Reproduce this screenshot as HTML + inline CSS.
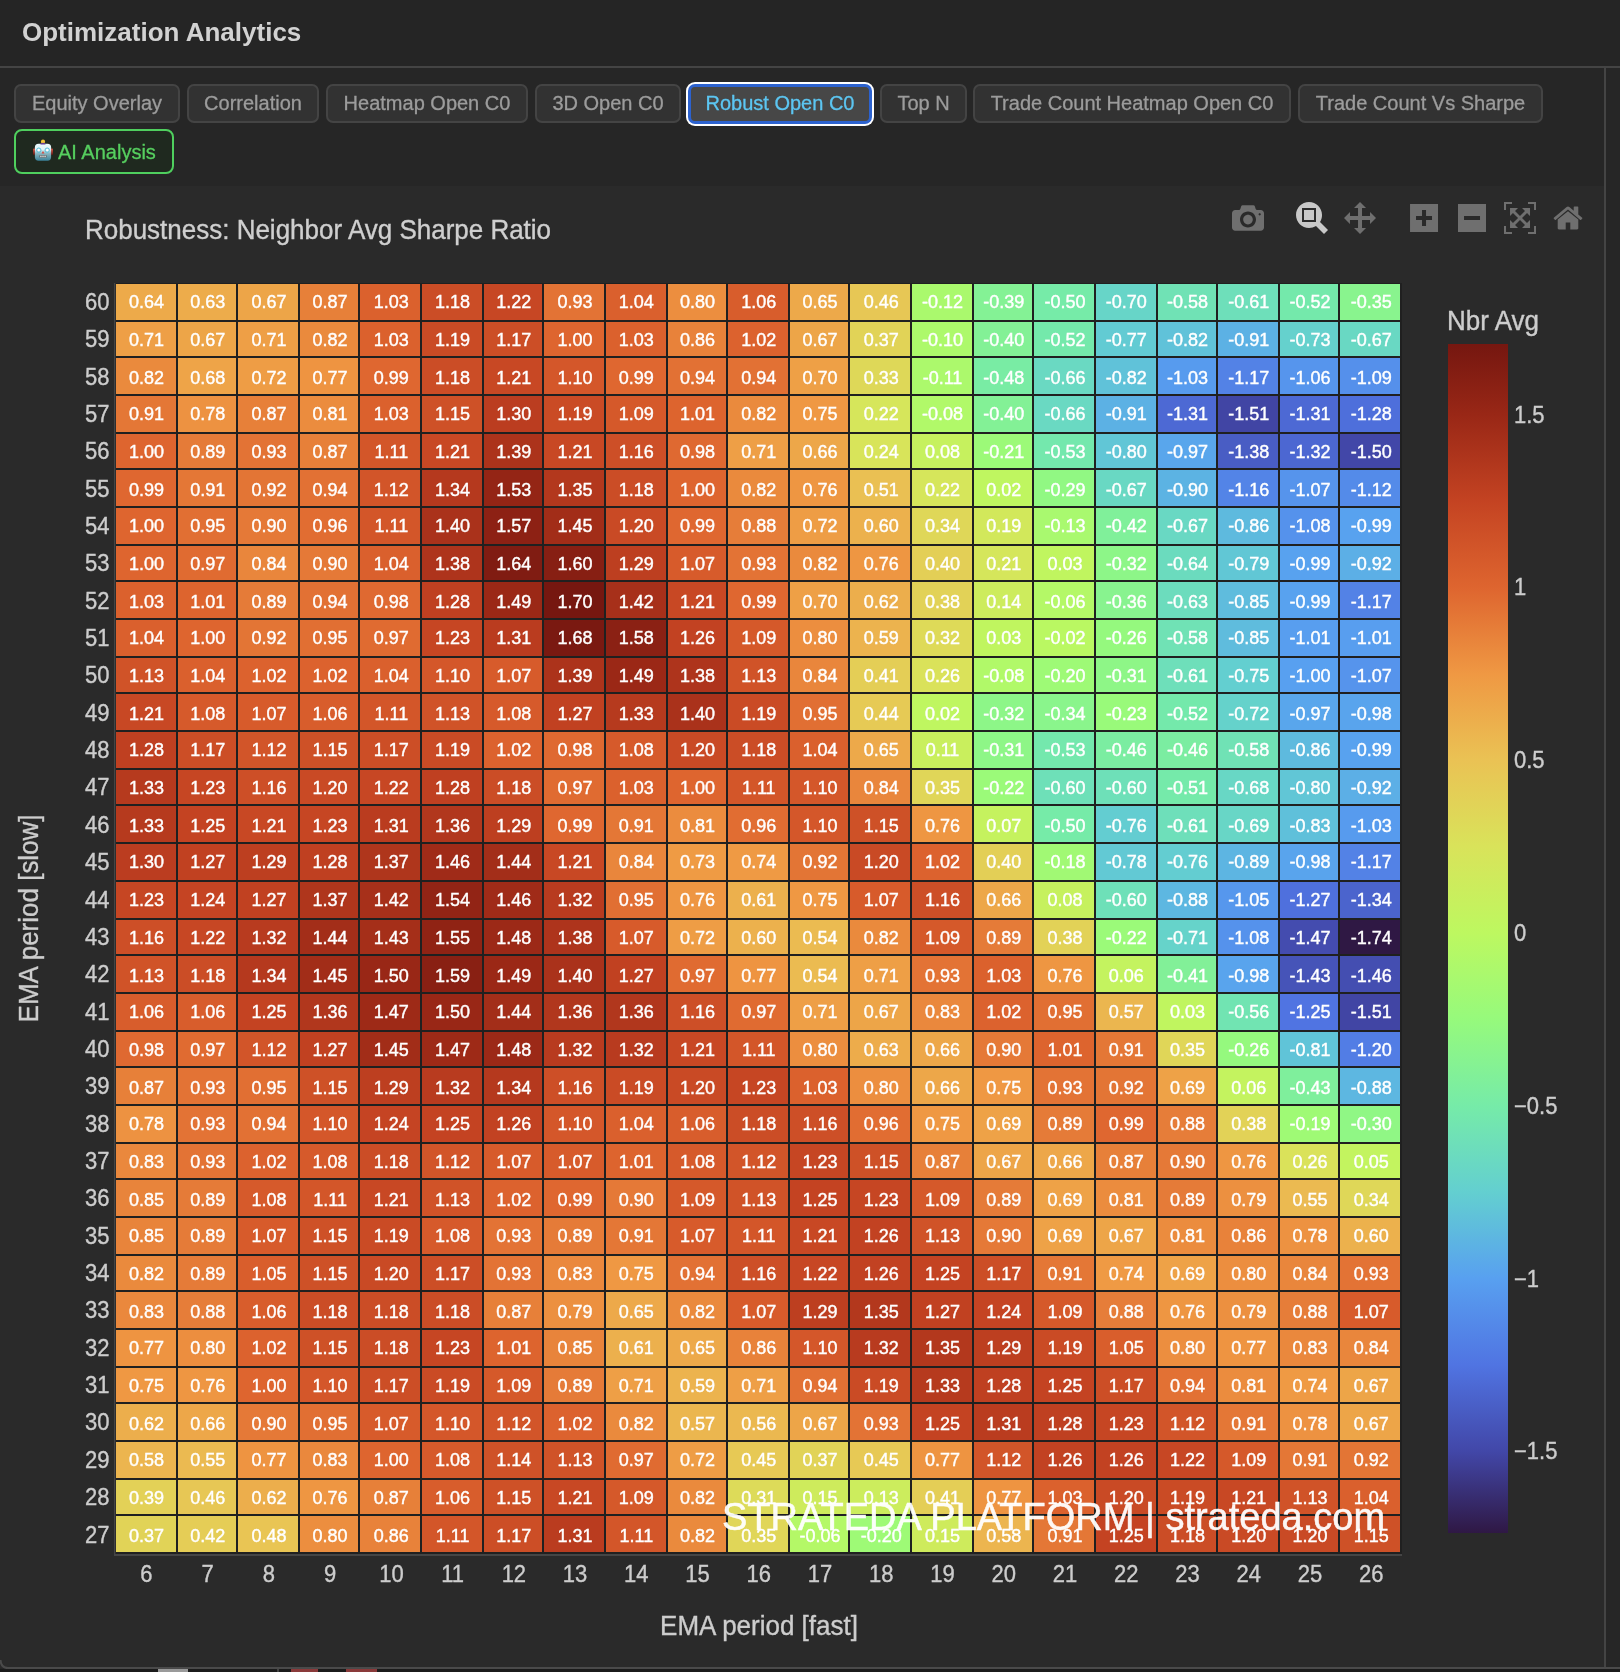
<!DOCTYPE html>
<html><head><meta charset="utf-8">
<style>
html,body{margin:0;padding:0;}
body>*{will-change:transform;}
body{-webkit-font-smoothing:antialiased;width:1620px;height:1672px;overflow:hidden;background:#262626;position:relative;font-family:"Liberation Sans",sans-serif;}
.abs{position:absolute;}
#hdr{position:absolute;left:0;top:0;width:1620px;height:66px;background:#252525;}
#title{position:absolute;left:22px;top:17px;font-weight:bold;font-size:26px;color:#d2d2d2;line-height:30px;white-space:nowrap;}
#hline{position:absolute;left:0;top:66px;width:1620px;height:2px;background:#444;}
#vline{position:absolute;left:1604px;top:68px;width:2px;height:1600px;background:#444;}
#plotbg{position:absolute;left:0;top:186px;width:1604px;height:1482px;background:#2a2a2a;}
.tab{position:absolute;top:84px;height:39px;box-sizing:border-box;border:2px solid #444;border-radius:7px;background:#323232;color:#9c9c9c;font-size:20px;line-height:34px;text-align:center;white-space:nowrap;-webkit-text-stroke:0.3px currentColor;}
.tab.active{top:84px;height:39.5px;border:3px solid #2c62cf;background:#474747;color:#5cc6f2;line-height:33px;box-shadow:0 0 0 2px #fff;}
#ai{position:absolute;left:14px;top:129px;width:160px;height:45px;box-sizing:border-box;border:2px solid #4fcf5e;border-radius:8px;background:#1f291f;}
#aitxt{position:absolute;left:58px;top:140px;font-size:20px;line-height:24px;color:#56cf5f;white-space:nowrap;-webkit-text-stroke:0.3px currentColor;}
.mb{position:absolute;top:201.7px;}
#bottom{position:absolute;left:0;top:1669px;width:1620px;height:3px;background:#1b1b1b;}
#bline{position:absolute;left:6px;top:1667px;width:1614px;height:2px;background:#4a4a4a;}
</style></head><body>
<div id="hdr"></div>
<div id="title">Optimization Analytics</div>
<div id="hline"></div>
<div class="tab" style="left:14px;width:166px">Equity Overlay</div><div class="tab" style="left:187px;width:132px">Correlation</div><div class="tab" style="left:326px;width:202px">Heatmap Open C0</div><div class="tab" style="left:535px;width:146px">3D Open C0</div><div class="tab active" style="left:688px;width:184px">Robust Open C0</div><div class="tab" style="left:880px;width:87px">Top N</div><div class="tab" style="left:973px;width:318px">Trade Count Heatmap Open C0</div><div class="tab" style="left:1298px;width:245px">Trade Count Vs Sharpe</div>
<div id="ai"></div><svg width="30" height="30" viewBox="0 0 30 30" style="position:absolute;left:28px;top:135px">
<defs><linearGradient id="rf" x1="0" y1="0" x2="0" y2="1">
<stop offset="0" stop-color="#e8fafd"/><stop offset="0.35" stop-color="#dff3f7"/><stop offset="0.55" stop-color="#8fb9c3"/><stop offset="1" stop-color="#3a8199"/></linearGradient>
<linearGradient id="re" x1="0" y1="0" x2="0" y2="1"><stop offset="0" stop-color="#d9584a"/><stop offset="1" stop-color="#5a1410"/></linearGradient></defs>
<rect x="5" y="13.6" width="2.4" height="6.4" rx="1" fill="url(#re)"/>
<rect x="22.6" y="13.6" width="2.4" height="6.4" rx="1" fill="url(#re)"/>
<rect x="6.9" y="8.7" width="16.2" height="17" rx="3.6" fill="url(#rf)"/>
<circle cx="15" cy="6.7" r="2.1" fill="#f0c43a"/>
<path d="M12.4 9.6 A2.6 1.9 0 0 1 17.6 9.6 Z" fill="#6a3d9a"/>
<circle cx="10.8" cy="15.2" r="2.2" fill="none" stroke="#56c0dc" stroke-width="1"/>
<circle cx="19.2" cy="15.2" r="2.2" fill="none" stroke="#56c0dc" stroke-width="1"/>
<circle cx="10.8" cy="15.2" r="1.1" fill="#fff"/>
<circle cx="19.2" cy="15.2" r="1.1" fill="#fff"/>
<path d="M13.6 18.6 L16.4 18.6 L15 16 Z" fill="#d8453a"/>
<rect x="11.2" y="20" width="7.6" height="2.8" rx="1" fill="#5d6b70"/>
<rect x="12.2" y="20.6" width="1.4" height="1.6" fill="#dcdcdc"/><rect x="14.3" y="20.6" width="1.4" height="1.6" fill="#dcdcdc"/><rect x="16.4" y="20.6" width="1.4" height="1.6" fill="#dcdcdc"/>
</svg><div id="aitxt">AI Analysis</div>
<div id="plotbg"></div>
<div id="vline"></div>
<svg class="abs" style="left:0;top:0" width="1604" height="1667" viewBox="0 0 1604 1667">
<defs><linearGradient id="cb" x1="0" y1="1" x2="0" y2="0"><stop offset="0.0000" stop-color="#2F1844"/><stop offset="0.0686" stop-color="#4247A8"/><stop offset="0.1413" stop-color="#5074E2"/><stop offset="0.2140" stop-color="#58A0F0"/><stop offset="0.2866" stop-color="#63CFD0"/><stop offset="0.3593" stop-color="#76EBA8"/><stop offset="0.4320" stop-color="#96FA7C"/><stop offset="0.5046" stop-color="#BDF860"/><stop offset="0.5773" stop-color="#D9E35A"/><stop offset="0.6500" stop-color="#EAC254"/><stop offset="0.7226" stop-color="#EF9843"/><stop offset="0.7953" stop-color="#DE652F"/><stop offset="0.8680" stop-color="#C44322"/><stop offset="0.9406" stop-color="#992716"/><stop offset="0.9988" stop-color="#761710"/></linearGradient></defs>
<text transform="translate(85 239) scale(1 1.05)" font-size="26" fill="#cfcfcf" stroke="#cfcfcf" stroke-width="0.35">Robustness: Neighbor Avg Sharpe Ratio</text>
<rect x="115.00" y="283.00" width="1287.00" height="1271.00" fill="#202020"/>
<rect x="116" y="284" width="60" height="36" fill="#edaa4a"/><rect x="178" y="284" width="58" height="36" fill="#edac4b"/><rect x="238" y="284" width="60" height="36" fill="#eda548"/><rect x="300" y="284" width="58" height="36" fill="#e78039"/><rect x="360" y="284" width="60" height="36" fill="#db612d"/><rect x="422" y="284" width="60" height="36" fill="#cb4d26"/><rect x="484" y="284" width="58" height="36" fill="#c74724"/><rect x="544" y="284" width="60" height="36" fill="#e37335"/><rect x="606" y="284" width="60" height="36" fill="#da602d"/><rect x="668" y="284" width="58" height="36" fill="#ec8e3f"/><rect x="728" y="284" width="60" height="36" fill="#d85d2c"/><rect x="790" y="284" width="58" height="36" fill="#eda94a"/><rect x="850" y="284" width="60" height="36" fill="#e7c755"/><rect x="912" y="284" width="60" height="36" fill="#aaf96d"/><rect x="974" y="284" width="58" height="36" fill="#84f295"/><rect x="1034" y="284" width="60" height="36" fill="#76eba8"/><rect x="1096" y="284" width="60" height="36" fill="#67d5c8"/><rect x="1158" y="284" width="58" height="36" fill="#70e2b5"/><rect x="1218" y="284" width="60" height="36" fill="#6edfba"/><rect x="1280" y="284" width="58" height="36" fill="#74e9ab"/><rect x="1340" y="284" width="60" height="36" fill="#89f48e"/><rect x="116" y="322" width="60" height="34" fill="#ee9f46"/><rect x="178" y="322" width="58" height="34" fill="#eda548"/><rect x="238" y="322" width="60" height="34" fill="#ee9f46"/><rect x="300" y="322" width="58" height="34" fill="#ea8a3d"/><rect x="360" y="322" width="60" height="34" fill="#db612d"/><rect x="422" y="322" width="60" height="34" fill="#ca4b25"/><rect x="484" y="322" width="58" height="34" fill="#cc4e26"/><rect x="544" y="322" width="60" height="34" fill="#de652f"/><rect x="606" y="322" width="60" height="34" fill="#db612d"/><rect x="668" y="322" width="58" height="34" fill="#e8823a"/><rect x="728" y="322" width="60" height="34" fill="#dc622e"/><rect x="790" y="322" width="58" height="34" fill="#eda548"/><rect x="850" y="322" width="60" height="34" fill="#e1d357"/><rect x="912" y="322" width="60" height="34" fill="#adf96b"/><rect x="974" y="322" width="58" height="34" fill="#83f196"/><rect x="1034" y="322" width="60" height="34" fill="#74e9ab"/><rect x="1096" y="322" width="60" height="34" fill="#62cbd3"/><rect x="1158" y="322" width="58" height="34" fill="#60c2d9"/><rect x="1218" y="322" width="60" height="34" fill="#5cb1e4"/><rect x="1280" y="322" width="58" height="34" fill="#65d1cd"/><rect x="1340" y="322" width="60" height="34" fill="#69d8c3"/><rect x="116" y="358" width="60" height="36" fill="#ea8a3d"/><rect x="178" y="358" width="58" height="36" fill="#eea448"/><rect x="238" y="358" width="60" height="36" fill="#ee9d45"/><rect x="300" y="358" width="58" height="36" fill="#ee9441"/><rect x="360" y="358" width="60" height="36" fill="#df6730"/><rect x="422" y="358" width="60" height="36" fill="#cb4d26"/><rect x="484" y="358" width="58" height="36" fill="#c84824"/><rect x="544" y="358" width="60" height="36" fill="#d4572a"/><rect x="606" y="358" width="60" height="36" fill="#df6730"/><rect x="668" y="358" width="58" height="36" fill="#e27134"/><rect x="728" y="358" width="60" height="36" fill="#e27134"/><rect x="790" y="358" width="58" height="36" fill="#eea046"/><rect x="850" y="358" width="60" height="36" fill="#ded858"/><rect x="912" y="358" width="60" height="36" fill="#acf96c"/><rect x="974" y="358" width="58" height="36" fill="#79eca4"/><rect x="1034" y="358" width="60" height="36" fill="#6ad9c2"/><rect x="1096" y="358" width="60" height="36" fill="#60c2d9"/><rect x="1158" y="358" width="58" height="36" fill="#579bee"/><rect x="1218" y="358" width="60" height="36" fill="#5382e6"/><rect x="1280" y="358" width="58" height="36" fill="#5695ed"/><rect x="1340" y="358" width="60" height="36" fill="#5590eb"/><rect x="116" y="396" width="60" height="36" fill="#e47736"/><rect x="178" y="396" width="58" height="36" fill="#ed9241"/><rect x="238" y="396" width="60" height="36" fill="#e78039"/><rect x="300" y="396" width="58" height="36" fill="#eb8c3e"/><rect x="360" y="396" width="60" height="36" fill="#db612d"/><rect x="422" y="396" width="60" height="36" fill="#ce5127"/><rect x="484" y="396" width="58" height="36" fill="#bb3d20"/><rect x="544" y="396" width="60" height="36" fill="#ca4b25"/><rect x="606" y="396" width="60" height="36" fill="#d5592a"/><rect x="668" y="396" width="58" height="36" fill="#dd642e"/><rect x="728" y="396" width="60" height="36" fill="#ea8a3d"/><rect x="790" y="396" width="58" height="36" fill="#ef9843"/><rect x="850" y="396" width="60" height="36" fill="#d6e65b"/><rect x="912" y="396" width="60" height="36" fill="#b1f969"/><rect x="974" y="396" width="58" height="36" fill="#83f196"/><rect x="1034" y="396" width="60" height="36" fill="#6ad9c2"/><rect x="1096" y="396" width="60" height="36" fill="#5cb1e4"/><rect x="1158" y="396" width="58" height="36" fill="#4d69d4"/><rect x="1218" y="396" width="60" height="36" fill="#4145a4"/><rect x="1280" y="396" width="58" height="36" fill="#4d69d4"/><rect x="1340" y="396" width="60" height="36" fill="#4e6fdb"/><rect x="116" y="434" width="60" height="34" fill="#de652f"/><rect x="178" y="434" width="58" height="34" fill="#e57b38"/><rect x="238" y="434" width="60" height="34" fill="#e37335"/><rect x="300" y="434" width="58" height="34" fill="#e78039"/><rect x="360" y="434" width="60" height="34" fill="#d35629"/><rect x="422" y="434" width="60" height="34" fill="#c84824"/><rect x="484" y="434" width="58" height="34" fill="#ac331b"/><rect x="544" y="434" width="60" height="34" fill="#c84824"/><rect x="606" y="434" width="60" height="34" fill="#cd4f27"/><rect x="668" y="434" width="58" height="34" fill="#df6931"/><rect x="728" y="434" width="60" height="34" fill="#ee9f46"/><rect x="790" y="434" width="58" height="34" fill="#eda749"/><rect x="850" y="434" width="60" height="34" fill="#d8e45a"/><rect x="912" y="434" width="60" height="34" fill="#c6f15e"/><rect x="974" y="434" width="58" height="34" fill="#9cfa78"/><rect x="1034" y="434" width="60" height="34" fill="#74e8ad"/><rect x="1096" y="434" width="60" height="34" fill="#61c6d6"/><rect x="1158" y="434" width="58" height="34" fill="#59a6ec"/><rect x="1218" y="434" width="60" height="34" fill="#495dc4"/><rect x="1280" y="434" width="58" height="34" fill="#4c67d2"/><rect x="1340" y="434" width="60" height="34" fill="#4247a8"/><rect x="116" y="470" width="60" height="36" fill="#df6730"/><rect x="178" y="470" width="58" height="36" fill="#e47736"/><rect x="238" y="470" width="60" height="36" fill="#e37535"/><rect x="300" y="470" width="58" height="36" fill="#e27134"/><rect x="360" y="470" width="60" height="36" fill="#d25529"/><rect x="422" y="470" width="60" height="36" fill="#b5391e"/><rect x="484" y="470" width="58" height="36" fill="#942515"/><rect x="544" y="470" width="60" height="36" fill="#b3381d"/><rect x="606" y="470" width="60" height="36" fill="#cb4d26"/><rect x="668" y="470" width="58" height="36" fill="#de652f"/><rect x="728" y="470" width="60" height="36" fill="#ea8a3d"/><rect x="790" y="470" width="58" height="36" fill="#ee9642"/><rect x="850" y="470" width="60" height="36" fill="#eac053"/><rect x="912" y="470" width="60" height="36" fill="#d6e65b"/><rect x="974" y="470" width="58" height="36" fill="#bff660"/><rect x="1034" y="470" width="60" height="36" fill="#91f883"/><rect x="1096" y="470" width="60" height="36" fill="#69d8c3"/><rect x="1158" y="470" width="58" height="36" fill="#5cb3e3"/><rect x="1218" y="470" width="60" height="36" fill="#5384e7"/><rect x="1280" y="470" width="58" height="36" fill="#5694ec"/><rect x="1340" y="470" width="60" height="36" fill="#548be9"/><rect x="116" y="508" width="60" height="36" fill="#de652f"/><rect x="178" y="508" width="58" height="36" fill="#e16f33"/><rect x="238" y="508" width="60" height="36" fill="#e57937"/><rect x="300" y="508" width="58" height="36" fill="#e16d32"/><rect x="360" y="508" width="60" height="36" fill="#d35629"/><rect x="422" y="508" width="60" height="36" fill="#aa321b"/><rect x="484" y="508" width="58" height="36" fill="#8d2114"/><rect x="544" y="508" width="60" height="36" fill="#a22d18"/><rect x="606" y="508" width="60" height="36" fill="#c94a25"/><rect x="668" y="508" width="58" height="36" fill="#df6730"/><rect x="728" y="508" width="60" height="36" fill="#e67d39"/><rect x="790" y="508" width="58" height="36" fill="#ee9d45"/><rect x="850" y="508" width="60" height="36" fill="#ecb14d"/><rect x="912" y="508" width="60" height="36" fill="#dfd758"/><rect x="974" y="508" width="58" height="36" fill="#d2e85b"/><rect x="1034" y="508" width="60" height="36" fill="#a9f96f"/><rect x="1096" y="508" width="60" height="36" fill="#80f09a"/><rect x="1158" y="508" width="58" height="36" fill="#69d8c3"/><rect x="1218" y="508" width="60" height="36" fill="#5ebade"/><rect x="1280" y="508" width="58" height="36" fill="#5592ec"/><rect x="1340" y="508" width="60" height="36" fill="#58a2ef"/><rect x="116" y="546" width="60" height="34" fill="#de652f"/><rect x="178" y="546" width="58" height="34" fill="#e06b31"/><rect x="238" y="546" width="60" height="34" fill="#e9863c"/><rect x="300" y="546" width="58" height="34" fill="#e57937"/><rect x="360" y="546" width="60" height="34" fill="#da602d"/><rect x="422" y="546" width="60" height="34" fill="#ae341c"/><rect x="484" y="546" width="58" height="34" fill="#801c12"/><rect x="544" y="546" width="60" height="34" fill="#871f13"/><rect x="606" y="546" width="60" height="34" fill="#bd3f20"/><rect x="668" y="546" width="58" height="34" fill="#d75b2b"/><rect x="728" y="546" width="60" height="34" fill="#e37335"/><rect x="790" y="546" width="58" height="34" fill="#ea8a3d"/><rect x="850" y="546" width="60" height="34" fill="#ee9642"/><rect x="912" y="546" width="60" height="34" fill="#e3cf56"/><rect x="974" y="546" width="58" height="34" fill="#d5e65b"/><rect x="1034" y="546" width="60" height="34" fill="#c0f55f"/><rect x="1096" y="546" width="60" height="34" fill="#8df688"/><rect x="1158" y="546" width="58" height="34" fill="#6bdbbe"/><rect x="1218" y="546" width="60" height="34" fill="#61c7d5"/><rect x="1280" y="546" width="58" height="34" fill="#58a2ef"/><rect x="1340" y="546" width="60" height="34" fill="#5cafe6"/><rect x="116" y="582" width="60" height="36" fill="#db612d"/><rect x="178" y="582" width="58" height="36" fill="#dd642e"/><rect x="238" y="582" width="60" height="36" fill="#e57b38"/><rect x="300" y="582" width="58" height="36" fill="#e27134"/><rect x="360" y="582" width="60" height="36" fill="#df6931"/><rect x="422" y="582" width="60" height="36" fill="#bf4021"/><rect x="484" y="582" width="58" height="36" fill="#9b2816"/><rect x="544" y="582" width="60" height="36" fill="#761710"/><rect x="606" y="582" width="60" height="36" fill="#a7301a"/><rect x="668" y="582" width="58" height="36" fill="#c84824"/><rect x="728" y="582" width="60" height="36" fill="#df6730"/><rect x="790" y="582" width="58" height="36" fill="#eea046"/><rect x="850" y="582" width="60" height="36" fill="#ecae4c"/><rect x="912" y="582" width="60" height="36" fill="#e2d257"/><rect x="974" y="582" width="58" height="36" fill="#cdec5d"/><rect x="1034" y="582" width="60" height="36" fill="#b4f867"/><rect x="1096" y="582" width="60" height="36" fill="#88f38f"/><rect x="1158" y="582" width="58" height="36" fill="#6cdcbd"/><rect x="1218" y="582" width="60" height="36" fill="#5fbcdd"/><rect x="1280" y="582" width="58" height="36" fill="#58a2ef"/><rect x="1340" y="582" width="60" height="36" fill="#5382e6"/><rect x="116" y="620" width="60" height="36" fill="#da602d"/><rect x="178" y="620" width="58" height="36" fill="#de652f"/><rect x="238" y="620" width="60" height="36" fill="#e37535"/><rect x="300" y="620" width="58" height="36" fill="#e16f33"/><rect x="360" y="620" width="60" height="36" fill="#e06b31"/><rect x="422" y="620" width="60" height="36" fill="#c64623"/><rect x="484" y="620" width="58" height="36" fill="#ba3c1f"/><rect x="544" y="620" width="60" height="36" fill="#7a1911"/><rect x="606" y="620" width="60" height="36" fill="#8b2114"/><rect x="668" y="620" width="58" height="36" fill="#c24222"/><rect x="728" y="620" width="60" height="36" fill="#d5592a"/><rect x="790" y="620" width="58" height="36" fill="#ec8e3f"/><rect x="850" y="620" width="60" height="36" fill="#ecb34e"/><rect x="912" y="620" width="60" height="36" fill="#deda58"/><rect x="974" y="620" width="58" height="36" fill="#c0f55f"/><rect x="1034" y="620" width="60" height="36" fill="#baf862"/><rect x="1096" y="620" width="60" height="36" fill="#95f97e"/><rect x="1158" y="620" width="58" height="36" fill="#70e2b5"/><rect x="1218" y="620" width="60" height="36" fill="#5fbcdd"/><rect x="1280" y="620" width="58" height="36" fill="#589eef"/><rect x="1340" y="620" width="60" height="36" fill="#589eef"/><rect x="116" y="658" width="60" height="34" fill="#d05328"/><rect x="178" y="658" width="58" height="34" fill="#da602d"/><rect x="238" y="658" width="60" height="34" fill="#dc622e"/><rect x="300" y="658" width="58" height="34" fill="#dc622e"/><rect x="360" y="658" width="60" height="34" fill="#da602d"/><rect x="422" y="658" width="60" height="34" fill="#d4572a"/><rect x="484" y="658" width="58" height="34" fill="#d75b2b"/><rect x="544" y="658" width="60" height="34" fill="#ac331b"/><rect x="606" y="658" width="60" height="34" fill="#9b2816"/><rect x="668" y="658" width="58" height="34" fill="#ae341c"/><rect x="728" y="658" width="60" height="34" fill="#d05328"/><rect x="790" y="658" width="58" height="34" fill="#e9863c"/><rect x="850" y="658" width="60" height="34" fill="#e4ce56"/><rect x="912" y="658" width="60" height="34" fill="#dae25a"/><rect x="974" y="658" width="58" height="34" fill="#b1f969"/><rect x="1034" y="658" width="60" height="34" fill="#9efa76"/><rect x="1096" y="658" width="60" height="34" fill="#8ef687"/><rect x="1158" y="658" width="58" height="34" fill="#6edfba"/><rect x="1218" y="658" width="60" height="34" fill="#63cfd0"/><rect x="1280" y="658" width="58" height="34" fill="#58a0f0"/><rect x="1340" y="658" width="60" height="34" fill="#5694ec"/><rect x="116" y="694" width="60" height="36" fill="#c84824"/><rect x="178" y="694" width="58" height="36" fill="#d65a2b"/><rect x="238" y="694" width="60" height="36" fill="#d75b2b"/><rect x="300" y="694" width="58" height="36" fill="#d85d2c"/><rect x="360" y="694" width="60" height="36" fill="#d35629"/><rect x="422" y="694" width="60" height="36" fill="#d05328"/><rect x="484" y="694" width="58" height="36" fill="#d65a2b"/><rect x="544" y="694" width="60" height="36" fill="#c14121"/><rect x="606" y="694" width="60" height="36" fill="#b63a1e"/><rect x="668" y="694" width="58" height="36" fill="#aa321b"/><rect x="728" y="694" width="60" height="36" fill="#ca4b25"/><rect x="790" y="694" width="58" height="36" fill="#e16f33"/><rect x="850" y="694" width="60" height="36" fill="#e6ca55"/><rect x="912" y="694" width="60" height="36" fill="#bff660"/><rect x="974" y="694" width="58" height="36" fill="#8df688"/><rect x="1034" y="694" width="60" height="36" fill="#8af58c"/><rect x="1096" y="694" width="60" height="36" fill="#99fa7a"/><rect x="1158" y="694" width="58" height="36" fill="#74e9ab"/><rect x="1218" y="694" width="60" height="36" fill="#65d2cb"/><rect x="1280" y="694" width="58" height="36" fill="#59a6ec"/><rect x="1340" y="694" width="60" height="36" fill="#59a4ed"/><rect x="116" y="732" width="60" height="36" fill="#bf4021"/><rect x="178" y="732" width="58" height="36" fill="#cc4e26"/><rect x="238" y="732" width="60" height="36" fill="#d25529"/><rect x="300" y="732" width="58" height="36" fill="#ce5127"/><rect x="360" y="732" width="60" height="36" fill="#cc4e26"/><rect x="422" y="732" width="60" height="36" fill="#ca4b25"/><rect x="484" y="732" width="58" height="36" fill="#dc622e"/><rect x="544" y="732" width="60" height="36" fill="#df6931"/><rect x="606" y="732" width="60" height="36" fill="#d65a2b"/><rect x="668" y="732" width="58" height="36" fill="#c94a25"/><rect x="728" y="732" width="60" height="36" fill="#cb4d26"/><rect x="790" y="732" width="58" height="36" fill="#da602d"/><rect x="850" y="732" width="60" height="36" fill="#eda94a"/><rect x="912" y="732" width="60" height="36" fill="#c9ef5d"/><rect x="974" y="732" width="58" height="36" fill="#8ef687"/><rect x="1034" y="732" width="60" height="36" fill="#74e8ad"/><rect x="1096" y="732" width="60" height="36" fill="#7beda1"/><rect x="1158" y="732" width="58" height="36" fill="#7beda1"/><rect x="1218" y="732" width="60" height="36" fill="#70e2b5"/><rect x="1280" y="732" width="58" height="36" fill="#5ebade"/><rect x="1340" y="732" width="60" height="36" fill="#58a2ef"/><rect x="116" y="770" width="60" height="34" fill="#b63a1e"/><rect x="178" y="770" width="58" height="34" fill="#c64623"/><rect x="238" y="770" width="60" height="34" fill="#cd4f27"/><rect x="300" y="770" width="58" height="34" fill="#c94a25"/><rect x="360" y="770" width="60" height="34" fill="#c74724"/><rect x="422" y="770" width="60" height="34" fill="#bf4021"/><rect x="484" y="770" width="58" height="34" fill="#cb4d26"/><rect x="544" y="770" width="60" height="34" fill="#e06b31"/><rect x="606" y="770" width="60" height="34" fill="#db612d"/><rect x="668" y="770" width="58" height="34" fill="#de652f"/><rect x="728" y="770" width="60" height="34" fill="#d35629"/><rect x="790" y="770" width="58" height="34" fill="#d4572a"/><rect x="850" y="770" width="60" height="34" fill="#e9863c"/><rect x="912" y="770" width="60" height="34" fill="#e0d658"/><rect x="974" y="770" width="58" height="34" fill="#9bfa79"/><rect x="1034" y="770" width="60" height="34" fill="#6ee0b8"/><rect x="1096" y="770" width="60" height="34" fill="#6ee0b8"/><rect x="1158" y="770" width="58" height="34" fill="#75eaaa"/><rect x="1218" y="770" width="60" height="34" fill="#68d7c5"/><rect x="1280" y="770" width="58" height="34" fill="#61c6d6"/><rect x="1340" y="770" width="60" height="34" fill="#5cafe6"/><rect x="116" y="806" width="60" height="36" fill="#b63a1e"/><rect x="178" y="806" width="58" height="36" fill="#c44322"/><rect x="238" y="806" width="60" height="36" fill="#c84824"/><rect x="300" y="806" width="58" height="36" fill="#c64623"/><rect x="360" y="806" width="60" height="36" fill="#ba3c1f"/><rect x="422" y="806" width="60" height="36" fill="#b1371d"/><rect x="484" y="806" width="58" height="36" fill="#bd3f20"/><rect x="544" y="806" width="60" height="36" fill="#df6730"/><rect x="606" y="806" width="60" height="36" fill="#e47736"/><rect x="668" y="806" width="58" height="36" fill="#eb8c3e"/><rect x="728" y="806" width="60" height="36" fill="#e16d32"/><rect x="790" y="806" width="58" height="36" fill="#d4572a"/><rect x="850" y="806" width="60" height="36" fill="#ce5127"/><rect x="912" y="806" width="60" height="36" fill="#ee9642"/><rect x="974" y="806" width="58" height="36" fill="#c5f25e"/><rect x="1034" y="806" width="60" height="36" fill="#76eba8"/><rect x="1096" y="806" width="60" height="36" fill="#63cdd1"/><rect x="1158" y="806" width="58" height="36" fill="#6edfba"/><rect x="1218" y="806" width="60" height="36" fill="#68d6c6"/><rect x="1280" y="806" width="58" height="36" fill="#5fc0da"/><rect x="1340" y="806" width="60" height="36" fill="#579bee"/><rect x="116" y="844" width="60" height="36" fill="#bb3d20"/><rect x="178" y="844" width="58" height="36" fill="#c14121"/><rect x="238" y="844" width="60" height="36" fill="#bd3f20"/><rect x="300" y="844" width="58" height="36" fill="#bf4021"/><rect x="360" y="844" width="60" height="36" fill="#af361c"/><rect x="422" y="844" width="60" height="36" fill="#a02b18"/><rect x="484" y="844" width="58" height="36" fill="#a32e19"/><rect x="544" y="844" width="60" height="36" fill="#c84824"/><rect x="606" y="844" width="60" height="36" fill="#e9863c"/><rect x="668" y="844" width="58" height="36" fill="#ef9b44"/><rect x="728" y="844" width="60" height="36" fill="#ef9a44"/><rect x="790" y="844" width="58" height="36" fill="#e37535"/><rect x="850" y="844" width="60" height="36" fill="#c94a25"/><rect x="912" y="844" width="60" height="36" fill="#dc622e"/><rect x="974" y="844" width="58" height="36" fill="#e3cf56"/><rect x="1034" y="844" width="60" height="36" fill="#a1f974"/><rect x="1096" y="844" width="60" height="36" fill="#62c9d4"/><rect x="1158" y="844" width="58" height="36" fill="#63cdd1"/><rect x="1218" y="844" width="60" height="36" fill="#5db5e2"/><rect x="1280" y="844" width="58" height="36" fill="#59a4ed"/><rect x="1340" y="844" width="60" height="36" fill="#5382e6"/><rect x="116" y="882" width="60" height="36" fill="#c64623"/><rect x="178" y="882" width="58" height="36" fill="#c54423"/><rect x="238" y="882" width="60" height="36" fill="#c14121"/><rect x="300" y="882" width="58" height="36" fill="#af361c"/><rect x="360" y="882" width="60" height="36" fill="#a7301a"/><rect x="422" y="882" width="60" height="36" fill="#922415"/><rect x="484" y="882" width="58" height="36" fill="#a02b18"/><rect x="544" y="882" width="60" height="36" fill="#b83b1f"/><rect x="606" y="882" width="60" height="36" fill="#e16f33"/><rect x="668" y="882" width="58" height="36" fill="#ee9642"/><rect x="728" y="882" width="60" height="36" fill="#ecb04d"/><rect x="790" y="882" width="58" height="36" fill="#ef9843"/><rect x="850" y="882" width="60" height="36" fill="#d75b2b"/><rect x="912" y="882" width="60" height="36" fill="#cd4f27"/><rect x="974" y="882" width="58" height="36" fill="#eda749"/><rect x="1034" y="882" width="60" height="36" fill="#c6f15e"/><rect x="1096" y="882" width="60" height="36" fill="#6ee0b8"/><rect x="1158" y="882" width="58" height="36" fill="#5db7e1"/><rect x="1218" y="882" width="60" height="36" fill="#5697ed"/><rect x="1280" y="882" width="58" height="36" fill="#4f70dd"/><rect x="1340" y="882" width="60" height="36" fill="#4b64cd"/><rect x="116" y="920" width="60" height="34" fill="#cd4f27"/><rect x="178" y="920" width="58" height="34" fill="#c74724"/><rect x="238" y="920" width="60" height="34" fill="#b83b1f"/><rect x="300" y="920" width="58" height="34" fill="#a32e19"/><rect x="360" y="920" width="60" height="34" fill="#a52f19"/><rect x="422" y="920" width="60" height="34" fill="#902314"/><rect x="484" y="920" width="58" height="34" fill="#9c2917"/><rect x="544" y="920" width="60" height="34" fill="#ae341c"/><rect x="606" y="920" width="60" height="34" fill="#d75b2b"/><rect x="668" y="920" width="58" height="34" fill="#ee9d45"/><rect x="728" y="920" width="60" height="34" fill="#ecb14d"/><rect x="790" y="920" width="58" height="34" fill="#ebbb51"/><rect x="850" y="920" width="60" height="34" fill="#ea8a3d"/><rect x="912" y="920" width="60" height="34" fill="#d5592a"/><rect x="974" y="920" width="58" height="34" fill="#e57b38"/><rect x="1034" y="920" width="60" height="34" fill="#e2d257"/><rect x="1096" y="920" width="60" height="34" fill="#9bfa79"/><rect x="1158" y="920" width="58" height="34" fill="#66d3ca"/><rect x="1218" y="920" width="60" height="34" fill="#5592ec"/><rect x="1280" y="920" width="58" height="34" fill="#444caf"/><rect x="1340" y="920" width="60" height="34" fill="#2f1844"/><rect x="116" y="956" width="60" height="36" fill="#d05328"/><rect x="178" y="956" width="58" height="36" fill="#cb4d26"/><rect x="238" y="956" width="60" height="36" fill="#b5391e"/><rect x="300" y="956" width="58" height="36" fill="#a22d18"/><rect x="360" y="956" width="60" height="36" fill="#992716"/><rect x="422" y="956" width="60" height="36" fill="#892013"/><rect x="484" y="956" width="58" height="36" fill="#9b2816"/><rect x="544" y="956" width="60" height="36" fill="#aa321b"/><rect x="606" y="956" width="60" height="36" fill="#c14121"/><rect x="668" y="956" width="58" height="36" fill="#e06b31"/><rect x="728" y="956" width="60" height="36" fill="#ee9441"/><rect x="790" y="956" width="58" height="36" fill="#ebbb51"/><rect x="850" y="956" width="60" height="36" fill="#ee9f46"/><rect x="912" y="956" width="60" height="36" fill="#e37335"/><rect x="974" y="956" width="58" height="36" fill="#db612d"/><rect x="1034" y="956" width="60" height="36" fill="#ee9642"/><rect x="1096" y="956" width="60" height="36" fill="#c4f35f"/><rect x="1158" y="956" width="58" height="36" fill="#82f098"/><rect x="1218" y="956" width="60" height="36" fill="#59a4ed"/><rect x="1280" y="956" width="58" height="36" fill="#4654b8"/><rect x="1340" y="956" width="60" height="36" fill="#444eb1"/><rect x="116" y="994" width="60" height="36" fill="#d85d2c"/><rect x="178" y="994" width="58" height="36" fill="#d85d2c"/><rect x="238" y="994" width="60" height="36" fill="#c44322"/><rect x="300" y="994" width="58" height="36" fill="#b1371d"/><rect x="360" y="994" width="60" height="36" fill="#9e2a17"/><rect x="422" y="994" width="60" height="36" fill="#992716"/><rect x="484" y="994" width="58" height="36" fill="#a32e19"/><rect x="544" y="994" width="60" height="36" fill="#b1371d"/><rect x="606" y="994" width="60" height="36" fill="#b1371d"/><rect x="668" y="994" width="58" height="36" fill="#cd4f27"/><rect x="728" y="994" width="60" height="36" fill="#e06b31"/><rect x="790" y="994" width="58" height="36" fill="#ee9f46"/><rect x="850" y="994" width="60" height="36" fill="#eda548"/><rect x="912" y="994" width="60" height="36" fill="#ea883d"/><rect x="974" y="994" width="58" height="36" fill="#dc622e"/><rect x="1034" y="994" width="60" height="36" fill="#e16f33"/><rect x="1096" y="994" width="60" height="36" fill="#ebb64f"/><rect x="1158" y="994" width="58" height="36" fill="#c0f55f"/><rect x="1218" y="994" width="60" height="36" fill="#71e4b2"/><rect x="1280" y="994" width="58" height="36" fill="#5074e2"/><rect x="1340" y="994" width="60" height="36" fill="#4145a4"/><rect x="116" y="1032" width="60" height="34" fill="#df6931"/><rect x="178" y="1032" width="58" height="34" fill="#e06b31"/><rect x="238" y="1032" width="60" height="34" fill="#d25529"/><rect x="300" y="1032" width="58" height="34" fill="#c14121"/><rect x="360" y="1032" width="60" height="34" fill="#a22d18"/><rect x="422" y="1032" width="60" height="34" fill="#9e2a17"/><rect x="484" y="1032" width="58" height="34" fill="#9c2917"/><rect x="544" y="1032" width="60" height="34" fill="#b83b1f"/><rect x="606" y="1032" width="60" height="34" fill="#b83b1f"/><rect x="668" y="1032" width="58" height="34" fill="#c84824"/><rect x="728" y="1032" width="60" height="34" fill="#d35629"/><rect x="790" y="1032" width="58" height="34" fill="#ec8e3f"/><rect x="850" y="1032" width="60" height="34" fill="#edac4b"/><rect x="912" y="1032" width="60" height="34" fill="#eda749"/><rect x="974" y="1032" width="58" height="34" fill="#e57937"/><rect x="1034" y="1032" width="60" height="34" fill="#dd642e"/><rect x="1096" y="1032" width="60" height="34" fill="#e47736"/><rect x="1158" y="1032" width="58" height="34" fill="#e0d658"/><rect x="1218" y="1032" width="60" height="34" fill="#95f97e"/><rect x="1280" y="1032" width="58" height="34" fill="#60c4d8"/><rect x="1340" y="1032" width="60" height="34" fill="#527de5"/><rect x="116" y="1068" width="60" height="36" fill="#e78039"/><rect x="178" y="1068" width="58" height="36" fill="#e37335"/><rect x="238" y="1068" width="60" height="36" fill="#e16f33"/><rect x="300" y="1068" width="58" height="36" fill="#ce5127"/><rect x="360" y="1068" width="60" height="36" fill="#bd3f20"/><rect x="422" y="1068" width="60" height="36" fill="#b83b1f"/><rect x="484" y="1068" width="58" height="36" fill="#b5391e"/><rect x="544" y="1068" width="60" height="36" fill="#cd4f27"/><rect x="606" y="1068" width="60" height="36" fill="#ca4b25"/><rect x="668" y="1068" width="58" height="36" fill="#c94a25"/><rect x="728" y="1068" width="60" height="36" fill="#c64623"/><rect x="790" y="1068" width="58" height="36" fill="#db612d"/><rect x="850" y="1068" width="60" height="36" fill="#ec8e3f"/><rect x="912" y="1068" width="60" height="36" fill="#eda749"/><rect x="974" y="1068" width="58" height="36" fill="#ef9843"/><rect x="1034" y="1068" width="60" height="36" fill="#e37335"/><rect x="1096" y="1068" width="60" height="36" fill="#e37535"/><rect x="1158" y="1068" width="58" height="36" fill="#eea247"/><rect x="1218" y="1068" width="60" height="36" fill="#c4f35f"/><rect x="1280" y="1068" width="58" height="36" fill="#7fef9c"/><rect x="1340" y="1068" width="60" height="36" fill="#5db7e1"/><rect x="116" y="1106" width="60" height="36" fill="#ed9241"/><rect x="178" y="1106" width="58" height="36" fill="#e37335"/><rect x="238" y="1106" width="60" height="36" fill="#e27134"/><rect x="300" y="1106" width="58" height="36" fill="#d4572a"/><rect x="360" y="1106" width="60" height="36" fill="#c54423"/><rect x="422" y="1106" width="60" height="36" fill="#c44322"/><rect x="484" y="1106" width="58" height="36" fill="#c24222"/><rect x="544" y="1106" width="60" height="36" fill="#d4572a"/><rect x="606" y="1106" width="60" height="36" fill="#da602d"/><rect x="668" y="1106" width="58" height="36" fill="#d85d2c"/><rect x="728" y="1106" width="60" height="36" fill="#cb4d26"/><rect x="790" y="1106" width="58" height="36" fill="#cd4f27"/><rect x="850" y="1106" width="60" height="36" fill="#e16d32"/><rect x="912" y="1106" width="60" height="36" fill="#ef9843"/><rect x="974" y="1106" width="58" height="36" fill="#eea247"/><rect x="1034" y="1106" width="60" height="36" fill="#e57b38"/><rect x="1096" y="1106" width="60" height="36" fill="#df6730"/><rect x="1158" y="1106" width="58" height="36" fill="#e67d39"/><rect x="1218" y="1106" width="60" height="36" fill="#e2d257"/><rect x="1280" y="1106" width="58" height="36" fill="#9ffa75"/><rect x="1340" y="1106" width="60" height="36" fill="#90f785"/><rect x="116" y="1144" width="60" height="34" fill="#ea883d"/><rect x="178" y="1144" width="58" height="34" fill="#e37335"/><rect x="238" y="1144" width="60" height="34" fill="#dc622e"/><rect x="300" y="1144" width="58" height="34" fill="#d65a2b"/><rect x="360" y="1144" width="60" height="34" fill="#cb4d26"/><rect x="422" y="1144" width="60" height="34" fill="#d25529"/><rect x="484" y="1144" width="58" height="34" fill="#d75b2b"/><rect x="544" y="1144" width="60" height="34" fill="#d75b2b"/><rect x="606" y="1144" width="60" height="34" fill="#dd642e"/><rect x="668" y="1144" width="58" height="34" fill="#d65a2b"/><rect x="728" y="1144" width="60" height="34" fill="#d25529"/><rect x="790" y="1144" width="58" height="34" fill="#c64623"/><rect x="850" y="1144" width="60" height="34" fill="#ce5127"/><rect x="912" y="1144" width="60" height="34" fill="#e78039"/><rect x="974" y="1144" width="58" height="34" fill="#eda548"/><rect x="1034" y="1144" width="60" height="34" fill="#eda749"/><rect x="1096" y="1144" width="60" height="34" fill="#e78039"/><rect x="1158" y="1144" width="58" height="34" fill="#e57937"/><rect x="1218" y="1144" width="60" height="34" fill="#ee9642"/><rect x="1280" y="1144" width="58" height="34" fill="#dae25a"/><rect x="1340" y="1144" width="60" height="34" fill="#c3f45f"/><rect x="116" y="1180" width="60" height="36" fill="#e8843b"/><rect x="178" y="1180" width="58" height="36" fill="#e57b38"/><rect x="238" y="1180" width="60" height="36" fill="#d65a2b"/><rect x="300" y="1180" width="58" height="36" fill="#d35629"/><rect x="360" y="1180" width="60" height="36" fill="#c84824"/><rect x="422" y="1180" width="60" height="36" fill="#d05328"/><rect x="484" y="1180" width="58" height="36" fill="#dc622e"/><rect x="544" y="1180" width="60" height="36" fill="#df6730"/><rect x="606" y="1180" width="60" height="36" fill="#e57937"/><rect x="668" y="1180" width="58" height="36" fill="#d5592a"/><rect x="728" y="1180" width="60" height="36" fill="#d05328"/><rect x="790" y="1180" width="58" height="36" fill="#c44322"/><rect x="850" y="1180" width="60" height="36" fill="#c64623"/><rect x="912" y="1180" width="60" height="36" fill="#d5592a"/><rect x="974" y="1180" width="58" height="36" fill="#e57b38"/><rect x="1034" y="1180" width="60" height="36" fill="#eea247"/><rect x="1096" y="1180" width="60" height="36" fill="#eb8c3e"/><rect x="1158" y="1180" width="58" height="36" fill="#e57b38"/><rect x="1218" y="1180" width="60" height="36" fill="#ec9040"/><rect x="1280" y="1180" width="58" height="36" fill="#ebba51"/><rect x="1340" y="1180" width="60" height="36" fill="#dfd758"/><rect x="116" y="1218" width="60" height="36" fill="#e8843b"/><rect x="178" y="1218" width="58" height="36" fill="#e57b38"/><rect x="238" y="1218" width="60" height="36" fill="#d75b2b"/><rect x="300" y="1218" width="58" height="36" fill="#ce5127"/><rect x="360" y="1218" width="60" height="36" fill="#ca4b25"/><rect x="422" y="1218" width="60" height="36" fill="#d65a2b"/><rect x="484" y="1218" width="58" height="36" fill="#e37335"/><rect x="544" y="1218" width="60" height="36" fill="#e57b38"/><rect x="606" y="1218" width="60" height="36" fill="#e47736"/><rect x="668" y="1218" width="58" height="36" fill="#d75b2b"/><rect x="728" y="1218" width="60" height="36" fill="#d35629"/><rect x="790" y="1218" width="58" height="36" fill="#c84824"/><rect x="850" y="1218" width="60" height="36" fill="#c24222"/><rect x="912" y="1218" width="60" height="36" fill="#d05328"/><rect x="974" y="1218" width="58" height="36" fill="#e57937"/><rect x="1034" y="1218" width="60" height="36" fill="#eea247"/><rect x="1096" y="1218" width="60" height="36" fill="#eda548"/><rect x="1158" y="1218" width="58" height="36" fill="#eb8c3e"/><rect x="1218" y="1218" width="60" height="36" fill="#e8823a"/><rect x="1280" y="1218" width="58" height="36" fill="#ed9241"/><rect x="1340" y="1218" width="60" height="36" fill="#ecb14d"/><rect x="116" y="1256" width="60" height="34" fill="#ea8a3d"/><rect x="178" y="1256" width="58" height="34" fill="#e57b38"/><rect x="238" y="1256" width="60" height="34" fill="#d95e2c"/><rect x="300" y="1256" width="58" height="34" fill="#ce5127"/><rect x="360" y="1256" width="60" height="34" fill="#c94a25"/><rect x="422" y="1256" width="60" height="34" fill="#cc4e26"/><rect x="484" y="1256" width="58" height="34" fill="#e37335"/><rect x="544" y="1256" width="60" height="34" fill="#ea883d"/><rect x="606" y="1256" width="60" height="34" fill="#ef9843"/><rect x="668" y="1256" width="58" height="34" fill="#e27134"/><rect x="728" y="1256" width="60" height="34" fill="#cd4f27"/><rect x="790" y="1256" width="58" height="34" fill="#c74724"/><rect x="850" y="1256" width="60" height="34" fill="#c24222"/><rect x="912" y="1256" width="60" height="34" fill="#c44322"/><rect x="974" y="1256" width="58" height="34" fill="#cc4e26"/><rect x="1034" y="1256" width="60" height="34" fill="#e47736"/><rect x="1096" y="1256" width="60" height="34" fill="#ef9a44"/><rect x="1158" y="1256" width="58" height="34" fill="#eea247"/><rect x="1218" y="1256" width="60" height="34" fill="#ec8e3f"/><rect x="1280" y="1256" width="58" height="34" fill="#e9863c"/><rect x="1340" y="1256" width="60" height="34" fill="#e37335"/><rect x="116" y="1292" width="60" height="36" fill="#ea883d"/><rect x="178" y="1292" width="58" height="36" fill="#e67d39"/><rect x="238" y="1292" width="60" height="36" fill="#d85d2c"/><rect x="300" y="1292" width="58" height="36" fill="#cb4d26"/><rect x="360" y="1292" width="60" height="36" fill="#cb4d26"/><rect x="422" y="1292" width="60" height="36" fill="#cb4d26"/><rect x="484" y="1292" width="58" height="36" fill="#e78039"/><rect x="544" y="1292" width="60" height="36" fill="#ec9040"/><rect x="606" y="1292" width="60" height="36" fill="#eda94a"/><rect x="668" y="1292" width="58" height="36" fill="#ea8a3d"/><rect x="728" y="1292" width="60" height="36" fill="#d75b2b"/><rect x="790" y="1292" width="58" height="36" fill="#bd3f20"/><rect x="850" y="1292" width="60" height="36" fill="#b3381d"/><rect x="912" y="1292" width="60" height="36" fill="#c14121"/><rect x="974" y="1292" width="58" height="36" fill="#c54423"/><rect x="1034" y="1292" width="60" height="36" fill="#d5592a"/><rect x="1096" y="1292" width="60" height="36" fill="#e67d39"/><rect x="1158" y="1292" width="58" height="36" fill="#ee9642"/><rect x="1218" y="1292" width="60" height="36" fill="#ec9040"/><rect x="1280" y="1292" width="58" height="36" fill="#e67d39"/><rect x="1340" y="1292" width="60" height="36" fill="#d75b2b"/><rect x="116" y="1330" width="60" height="36" fill="#ee9441"/><rect x="178" y="1330" width="58" height="36" fill="#ec8e3f"/><rect x="238" y="1330" width="60" height="36" fill="#dc622e"/><rect x="300" y="1330" width="58" height="36" fill="#ce5127"/><rect x="360" y="1330" width="60" height="36" fill="#cb4d26"/><rect x="422" y="1330" width="60" height="36" fill="#c64623"/><rect x="484" y="1330" width="58" height="36" fill="#dd642e"/><rect x="544" y="1330" width="60" height="36" fill="#e8843b"/><rect x="606" y="1330" width="60" height="36" fill="#ecb04d"/><rect x="668" y="1330" width="58" height="36" fill="#eda94a"/><rect x="728" y="1330" width="60" height="36" fill="#e8823a"/><rect x="790" y="1330" width="58" height="36" fill="#d4572a"/><rect x="850" y="1330" width="60" height="36" fill="#b83b1f"/><rect x="912" y="1330" width="60" height="36" fill="#b3381d"/><rect x="974" y="1330" width="58" height="36" fill="#bd3f20"/><rect x="1034" y="1330" width="60" height="36" fill="#ca4b25"/><rect x="1096" y="1330" width="60" height="36" fill="#d95e2c"/><rect x="1158" y="1330" width="58" height="36" fill="#ec8e3f"/><rect x="1218" y="1330" width="60" height="36" fill="#ee9441"/><rect x="1280" y="1330" width="58" height="36" fill="#ea883d"/><rect x="1340" y="1330" width="60" height="36" fill="#e9863c"/><rect x="116" y="1368" width="60" height="34" fill="#ef9843"/><rect x="178" y="1368" width="58" height="34" fill="#ee9642"/><rect x="238" y="1368" width="60" height="34" fill="#de652f"/><rect x="300" y="1368" width="58" height="34" fill="#d4572a"/><rect x="360" y="1368" width="60" height="34" fill="#cc4e26"/><rect x="422" y="1368" width="60" height="34" fill="#ca4b25"/><rect x="484" y="1368" width="58" height="34" fill="#d5592a"/><rect x="544" y="1368" width="60" height="34" fill="#e57b38"/><rect x="606" y="1368" width="60" height="34" fill="#ee9f46"/><rect x="668" y="1368" width="58" height="34" fill="#ecb34e"/><rect x="728" y="1368" width="60" height="34" fill="#ee9f46"/><rect x="790" y="1368" width="58" height="34" fill="#e27134"/><rect x="850" y="1368" width="60" height="34" fill="#ca4b25"/><rect x="912" y="1368" width="60" height="34" fill="#b63a1e"/><rect x="974" y="1368" width="58" height="34" fill="#bf4021"/><rect x="1034" y="1368" width="60" height="34" fill="#c44322"/><rect x="1096" y="1368" width="60" height="34" fill="#cc4e26"/><rect x="1158" y="1368" width="58" height="34" fill="#e27134"/><rect x="1218" y="1368" width="60" height="34" fill="#eb8c3e"/><rect x="1280" y="1368" width="58" height="34" fill="#ef9a44"/><rect x="1340" y="1368" width="60" height="34" fill="#eda548"/><rect x="116" y="1404" width="60" height="36" fill="#ecae4c"/><rect x="178" y="1404" width="58" height="36" fill="#eda749"/><rect x="238" y="1404" width="60" height="36" fill="#e57937"/><rect x="300" y="1404" width="58" height="36" fill="#e16f33"/><rect x="360" y="1404" width="60" height="36" fill="#d75b2b"/><rect x="422" y="1404" width="60" height="36" fill="#d4572a"/><rect x="484" y="1404" width="58" height="36" fill="#d25529"/><rect x="544" y="1404" width="60" height="36" fill="#dc622e"/><rect x="606" y="1404" width="60" height="36" fill="#ea8a3d"/><rect x="668" y="1404" width="58" height="36" fill="#ebb64f"/><rect x="728" y="1404" width="60" height="36" fill="#ebb850"/><rect x="790" y="1404" width="58" height="36" fill="#eda548"/><rect x="850" y="1404" width="60" height="36" fill="#e37335"/><rect x="912" y="1404" width="60" height="36" fill="#c44322"/><rect x="974" y="1404" width="58" height="36" fill="#ba3c1f"/><rect x="1034" y="1404" width="60" height="36" fill="#bf4021"/><rect x="1096" y="1404" width="60" height="36" fill="#c64623"/><rect x="1158" y="1404" width="58" height="36" fill="#d25529"/><rect x="1218" y="1404" width="60" height="36" fill="#e47736"/><rect x="1280" y="1404" width="58" height="36" fill="#ed9241"/><rect x="1340" y="1404" width="60" height="36" fill="#eda548"/><rect x="116" y="1442" width="60" height="36" fill="#ecb54f"/><rect x="178" y="1442" width="58" height="36" fill="#ebba51"/><rect x="238" y="1442" width="60" height="36" fill="#ee9441"/><rect x="300" y="1442" width="58" height="36" fill="#ea883d"/><rect x="360" y="1442" width="60" height="36" fill="#de652f"/><rect x="422" y="1442" width="60" height="36" fill="#d65a2b"/><rect x="484" y="1442" width="58" height="36" fill="#cf5228"/><rect x="544" y="1442" width="60" height="36" fill="#d05328"/><rect x="606" y="1442" width="60" height="36" fill="#e06b31"/><rect x="668" y="1442" width="58" height="36" fill="#ee9d45"/><rect x="728" y="1442" width="60" height="36" fill="#e7c955"/><rect x="790" y="1442" width="58" height="36" fill="#e1d357"/><rect x="850" y="1442" width="60" height="36" fill="#e7c955"/><rect x="912" y="1442" width="60" height="36" fill="#ee9441"/><rect x="974" y="1442" width="58" height="36" fill="#d25529"/><rect x="1034" y="1442" width="60" height="36" fill="#c24222"/><rect x="1096" y="1442" width="60" height="36" fill="#c24222"/><rect x="1158" y="1442" width="58" height="36" fill="#c74724"/><rect x="1218" y="1442" width="60" height="36" fill="#d5592a"/><rect x="1280" y="1442" width="58" height="36" fill="#e47736"/><rect x="1340" y="1442" width="60" height="36" fill="#e37535"/><rect x="116" y="1480" width="60" height="34" fill="#e3d157"/><rect x="178" y="1480" width="58" height="34" fill="#e7c755"/><rect x="238" y="1480" width="60" height="34" fill="#ecae4c"/><rect x="300" y="1480" width="58" height="34" fill="#ee9642"/><rect x="360" y="1480" width="60" height="34" fill="#e78039"/><rect x="422" y="1480" width="60" height="34" fill="#d85d2c"/><rect x="484" y="1480" width="58" height="34" fill="#ce5127"/><rect x="544" y="1480" width="60" height="34" fill="#c84824"/><rect x="606" y="1480" width="60" height="34" fill="#d5592a"/><rect x="668" y="1480" width="58" height="34" fill="#ea8a3d"/><rect x="728" y="1480" width="60" height="34" fill="#dddb59"/><rect x="790" y="1480" width="58" height="34" fill="#ceeb5c"/><rect x="850" y="1480" width="60" height="34" fill="#cced5d"/><rect x="912" y="1480" width="60" height="34" fill="#e4ce56"/><rect x="974" y="1480" width="58" height="34" fill="#ee9441"/><rect x="1034" y="1480" width="60" height="34" fill="#db612d"/><rect x="1096" y="1480" width="60" height="34" fill="#c94a25"/><rect x="1158" y="1480" width="58" height="34" fill="#ca4b25"/><rect x="1218" y="1480" width="60" height="34" fill="#c84824"/><rect x="1280" y="1480" width="58" height="34" fill="#d05328"/><rect x="1340" y="1480" width="60" height="34" fill="#da602d"/><rect x="116" y="1516" width="60" height="36" fill="#e1d357"/><rect x="178" y="1516" width="58" height="36" fill="#e5cd56"/><rect x="238" y="1516" width="60" height="36" fill="#e9c554"/><rect x="300" y="1516" width="58" height="36" fill="#ec8e3f"/><rect x="360" y="1516" width="60" height="36" fill="#e8823a"/><rect x="422" y="1516" width="60" height="36" fill="#d35629"/><rect x="484" y="1516" width="58" height="36" fill="#cc4e26"/><rect x="544" y="1516" width="60" height="36" fill="#ba3c1f"/><rect x="606" y="1516" width="60" height="36" fill="#d35629"/><rect x="668" y="1516" width="58" height="36" fill="#ea8a3d"/><rect x="728" y="1516" width="60" height="36" fill="#e0d658"/><rect x="790" y="1516" width="58" height="36" fill="#b4f867"/><rect x="850" y="1516" width="60" height="36" fill="#9efa76"/><rect x="912" y="1516" width="60" height="36" fill="#ceeb5c"/><rect x="974" y="1516" width="58" height="36" fill="#ecb54f"/><rect x="1034" y="1516" width="60" height="36" fill="#e47736"/><rect x="1096" y="1516" width="60" height="36" fill="#c44322"/><rect x="1158" y="1516" width="58" height="36" fill="#cb4d26"/><rect x="1218" y="1516" width="60" height="36" fill="#c94a25"/><rect x="1280" y="1516" width="58" height="36" fill="#c94a25"/><rect x="1340" y="1516" width="60" height="36" fill="#ce5127"/>
<rect x="114" y="283.00" width="1.4" height="1273.00" fill="#454545"/>
<rect x="114" y="1554" width="1288.00" height="2" fill="#454545"/>
<g font-size="18" fill="#fff" stroke="#fff" stroke-width="0.4" text-anchor="middle"><text x="146.42" y="308">0.64</text><text x="207.66" y="308">0.63</text><text x="268.90" y="308">0.67</text><text x="330.13" y="308">0.87</text><text x="391.37" y="308">1.03</text><text x="452.61" y="308">1.18</text><text x="513.85" y="308">1.22</text><text x="575.09" y="308">0.93</text><text x="636.32" y="308">1.04</text><text x="697.56" y="308">0.80</text><text x="758.80" y="308">1.06</text><text x="820.04" y="308">0.65</text><text x="881.28" y="308">0.46</text><text x="942.51" y="308">-0.12</text><text x="1003.75" y="308">-0.39</text><text x="1064.99" y="308">-0.50</text><text x="1126.23" y="308">-0.70</text><text x="1187.47" y="308">-0.58</text><text x="1248.70" y="308">-0.61</text><text x="1309.94" y="308">-0.52</text><text x="1371.18" y="308">-0.35</text><text x="146.42" y="346">0.71</text><text x="207.66" y="346">0.67</text><text x="268.90" y="346">0.71</text><text x="330.13" y="346">0.82</text><text x="391.37" y="346">1.03</text><text x="452.61" y="346">1.19</text><text x="513.85" y="346">1.17</text><text x="575.09" y="346">1.00</text><text x="636.32" y="346">1.03</text><text x="697.56" y="346">0.86</text><text x="758.80" y="346">1.02</text><text x="820.04" y="346">0.67</text><text x="881.28" y="346">0.37</text><text x="942.51" y="346">-0.10</text><text x="1003.75" y="346">-0.40</text><text x="1064.99" y="346">-0.52</text><text x="1126.23" y="346">-0.77</text><text x="1187.47" y="346">-0.82</text><text x="1248.70" y="346">-0.91</text><text x="1309.94" y="346">-0.73</text><text x="1371.18" y="346">-0.67</text><text x="146.42" y="384">0.82</text><text x="207.66" y="384">0.68</text><text x="268.90" y="384">0.72</text><text x="330.13" y="384">0.77</text><text x="391.37" y="384">0.99</text><text x="452.61" y="384">1.18</text><text x="513.85" y="384">1.21</text><text x="575.09" y="384">1.10</text><text x="636.32" y="384">0.99</text><text x="697.56" y="384">0.94</text><text x="758.80" y="384">0.94</text><text x="820.04" y="384">0.70</text><text x="881.28" y="384">0.33</text><text x="942.51" y="384">-0.11</text><text x="1003.75" y="384">-0.48</text><text x="1064.99" y="384">-0.66</text><text x="1126.23" y="384">-0.82</text><text x="1187.47" y="384">-1.03</text><text x="1248.70" y="384">-1.17</text><text x="1309.94" y="384">-1.06</text><text x="1371.18" y="384">-1.09</text><text x="146.42" y="420">0.91</text><text x="207.66" y="420">0.78</text><text x="268.90" y="420">0.87</text><text x="330.13" y="420">0.81</text><text x="391.37" y="420">1.03</text><text x="452.61" y="420">1.15</text><text x="513.85" y="420">1.30</text><text x="575.09" y="420">1.19</text><text x="636.32" y="420">1.09</text><text x="697.56" y="420">1.01</text><text x="758.80" y="420">0.82</text><text x="820.04" y="420">0.75</text><text x="881.28" y="420">0.22</text><text x="942.51" y="420">-0.08</text><text x="1003.75" y="420">-0.40</text><text x="1064.99" y="420">-0.66</text><text x="1126.23" y="420">-0.91</text><text x="1187.47" y="420">-1.31</text><text x="1248.70" y="420">-1.51</text><text x="1309.94" y="420">-1.31</text><text x="1371.18" y="420">-1.28</text><text x="146.42" y="458">1.00</text><text x="207.66" y="458">0.89</text><text x="268.90" y="458">0.93</text><text x="330.13" y="458">0.87</text><text x="391.37" y="458">1.11</text><text x="452.61" y="458">1.21</text><text x="513.85" y="458">1.39</text><text x="575.09" y="458">1.21</text><text x="636.32" y="458">1.16</text><text x="697.56" y="458">0.98</text><text x="758.80" y="458">0.71</text><text x="820.04" y="458">0.66</text><text x="881.28" y="458">0.24</text><text x="942.51" y="458">0.08</text><text x="1003.75" y="458">-0.21</text><text x="1064.99" y="458">-0.53</text><text x="1126.23" y="458">-0.80</text><text x="1187.47" y="458">-0.97</text><text x="1248.70" y="458">-1.38</text><text x="1309.94" y="458">-1.32</text><text x="1371.18" y="458">-1.50</text><text x="146.42" y="496">0.99</text><text x="207.66" y="496">0.91</text><text x="268.90" y="496">0.92</text><text x="330.13" y="496">0.94</text><text x="391.37" y="496">1.12</text><text x="452.61" y="496">1.34</text><text x="513.85" y="496">1.53</text><text x="575.09" y="496">1.35</text><text x="636.32" y="496">1.18</text><text x="697.56" y="496">1.00</text><text x="758.80" y="496">0.82</text><text x="820.04" y="496">0.76</text><text x="881.28" y="496">0.51</text><text x="942.51" y="496">0.22</text><text x="1003.75" y="496">0.02</text><text x="1064.99" y="496">-0.29</text><text x="1126.23" y="496">-0.67</text><text x="1187.47" y="496">-0.90</text><text x="1248.70" y="496">-1.16</text><text x="1309.94" y="496">-1.07</text><text x="1371.18" y="496">-1.12</text><text x="146.42" y="532">1.00</text><text x="207.66" y="532">0.95</text><text x="268.90" y="532">0.90</text><text x="330.13" y="532">0.96</text><text x="391.37" y="532">1.11</text><text x="452.61" y="532">1.40</text><text x="513.85" y="532">1.57</text><text x="575.09" y="532">1.45</text><text x="636.32" y="532">1.20</text><text x="697.56" y="532">0.99</text><text x="758.80" y="532">0.88</text><text x="820.04" y="532">0.72</text><text x="881.28" y="532">0.60</text><text x="942.51" y="532">0.34</text><text x="1003.75" y="532">0.19</text><text x="1064.99" y="532">-0.13</text><text x="1126.23" y="532">-0.42</text><text x="1187.47" y="532">-0.67</text><text x="1248.70" y="532">-0.86</text><text x="1309.94" y="532">-1.08</text><text x="1371.18" y="532">-0.99</text><text x="146.42" y="570">1.00</text><text x="207.66" y="570">0.97</text><text x="268.90" y="570">0.84</text><text x="330.13" y="570">0.90</text><text x="391.37" y="570">1.04</text><text x="452.61" y="570">1.38</text><text x="513.85" y="570">1.64</text><text x="575.09" y="570">1.60</text><text x="636.32" y="570">1.29</text><text x="697.56" y="570">1.07</text><text x="758.80" y="570">0.93</text><text x="820.04" y="570">0.82</text><text x="881.28" y="570">0.76</text><text x="942.51" y="570">0.40</text><text x="1003.75" y="570">0.21</text><text x="1064.99" y="570">0.03</text><text x="1126.23" y="570">-0.32</text><text x="1187.47" y="570">-0.64</text><text x="1248.70" y="570">-0.79</text><text x="1309.94" y="570">-0.99</text><text x="1371.18" y="570">-0.92</text><text x="146.42" y="608">1.03</text><text x="207.66" y="608">1.01</text><text x="268.90" y="608">0.89</text><text x="330.13" y="608">0.94</text><text x="391.37" y="608">0.98</text><text x="452.61" y="608">1.28</text><text x="513.85" y="608">1.49</text><text x="575.09" y="608">1.70</text><text x="636.32" y="608">1.42</text><text x="697.56" y="608">1.21</text><text x="758.80" y="608">0.99</text><text x="820.04" y="608">0.70</text><text x="881.28" y="608">0.62</text><text x="942.51" y="608">0.38</text><text x="1003.75" y="608">0.14</text><text x="1064.99" y="608">-0.06</text><text x="1126.23" y="608">-0.36</text><text x="1187.47" y="608">-0.63</text><text x="1248.70" y="608">-0.85</text><text x="1309.94" y="608">-0.99</text><text x="1371.18" y="608">-1.17</text><text x="146.42" y="644">1.04</text><text x="207.66" y="644">1.00</text><text x="268.90" y="644">0.92</text><text x="330.13" y="644">0.95</text><text x="391.37" y="644">0.97</text><text x="452.61" y="644">1.23</text><text x="513.85" y="644">1.31</text><text x="575.09" y="644">1.68</text><text x="636.32" y="644">1.58</text><text x="697.56" y="644">1.26</text><text x="758.80" y="644">1.09</text><text x="820.04" y="644">0.80</text><text x="881.28" y="644">0.59</text><text x="942.51" y="644">0.32</text><text x="1003.75" y="644">0.03</text><text x="1064.99" y="644">-0.02</text><text x="1126.23" y="644">-0.26</text><text x="1187.47" y="644">-0.58</text><text x="1248.70" y="644">-0.85</text><text x="1309.94" y="644">-1.01</text><text x="1371.18" y="644">-1.01</text><text x="146.42" y="682">1.13</text><text x="207.66" y="682">1.04</text><text x="268.90" y="682">1.02</text><text x="330.13" y="682">1.02</text><text x="391.37" y="682">1.04</text><text x="452.61" y="682">1.10</text><text x="513.85" y="682">1.07</text><text x="575.09" y="682">1.39</text><text x="636.32" y="682">1.49</text><text x="697.56" y="682">1.38</text><text x="758.80" y="682">1.13</text><text x="820.04" y="682">0.84</text><text x="881.28" y="682">0.41</text><text x="942.51" y="682">0.26</text><text x="1003.75" y="682">-0.08</text><text x="1064.99" y="682">-0.20</text><text x="1126.23" y="682">-0.31</text><text x="1187.47" y="682">-0.61</text><text x="1248.70" y="682">-0.75</text><text x="1309.94" y="682">-1.00</text><text x="1371.18" y="682">-1.07</text><text x="146.42" y="720">1.21</text><text x="207.66" y="720">1.08</text><text x="268.90" y="720">1.07</text><text x="330.13" y="720">1.06</text><text x="391.37" y="720">1.11</text><text x="452.61" y="720">1.13</text><text x="513.85" y="720">1.08</text><text x="575.09" y="720">1.27</text><text x="636.32" y="720">1.33</text><text x="697.56" y="720">1.40</text><text x="758.80" y="720">1.19</text><text x="820.04" y="720">0.95</text><text x="881.28" y="720">0.44</text><text x="942.51" y="720">0.02</text><text x="1003.75" y="720">-0.32</text><text x="1064.99" y="720">-0.34</text><text x="1126.23" y="720">-0.23</text><text x="1187.47" y="720">-0.52</text><text x="1248.70" y="720">-0.72</text><text x="1309.94" y="720">-0.97</text><text x="1371.18" y="720">-0.98</text><text x="146.42" y="756">1.28</text><text x="207.66" y="756">1.17</text><text x="268.90" y="756">1.12</text><text x="330.13" y="756">1.15</text><text x="391.37" y="756">1.17</text><text x="452.61" y="756">1.19</text><text x="513.85" y="756">1.02</text><text x="575.09" y="756">0.98</text><text x="636.32" y="756">1.08</text><text x="697.56" y="756">1.20</text><text x="758.80" y="756">1.18</text><text x="820.04" y="756">1.04</text><text x="881.28" y="756">0.65</text><text x="942.51" y="756">0.11</text><text x="1003.75" y="756">-0.31</text><text x="1064.99" y="756">-0.53</text><text x="1126.23" y="756">-0.46</text><text x="1187.47" y="756">-0.46</text><text x="1248.70" y="756">-0.58</text><text x="1309.94" y="756">-0.86</text><text x="1371.18" y="756">-0.99</text><text x="146.42" y="794">1.33</text><text x="207.66" y="794">1.23</text><text x="268.90" y="794">1.16</text><text x="330.13" y="794">1.20</text><text x="391.37" y="794">1.22</text><text x="452.61" y="794">1.28</text><text x="513.85" y="794">1.18</text><text x="575.09" y="794">0.97</text><text x="636.32" y="794">1.03</text><text x="697.56" y="794">1.00</text><text x="758.80" y="794">1.11</text><text x="820.04" y="794">1.10</text><text x="881.28" y="794">0.84</text><text x="942.51" y="794">0.35</text><text x="1003.75" y="794">-0.22</text><text x="1064.99" y="794">-0.60</text><text x="1126.23" y="794">-0.60</text><text x="1187.47" y="794">-0.51</text><text x="1248.70" y="794">-0.68</text><text x="1309.94" y="794">-0.80</text><text x="1371.18" y="794">-0.92</text><text x="146.42" y="832">1.33</text><text x="207.66" y="832">1.25</text><text x="268.90" y="832">1.21</text><text x="330.13" y="832">1.23</text><text x="391.37" y="832">1.31</text><text x="452.61" y="832">1.36</text><text x="513.85" y="832">1.29</text><text x="575.09" y="832">0.99</text><text x="636.32" y="832">0.91</text><text x="697.56" y="832">0.81</text><text x="758.80" y="832">0.96</text><text x="820.04" y="832">1.10</text><text x="881.28" y="832">1.15</text><text x="942.51" y="832">0.76</text><text x="1003.75" y="832">0.07</text><text x="1064.99" y="832">-0.50</text><text x="1126.23" y="832">-0.76</text><text x="1187.47" y="832">-0.61</text><text x="1248.70" y="832">-0.69</text><text x="1309.94" y="832">-0.83</text><text x="1371.18" y="832">-1.03</text><text x="146.42" y="868">1.30</text><text x="207.66" y="868">1.27</text><text x="268.90" y="868">1.29</text><text x="330.13" y="868">1.28</text><text x="391.37" y="868">1.37</text><text x="452.61" y="868">1.46</text><text x="513.85" y="868">1.44</text><text x="575.09" y="868">1.21</text><text x="636.32" y="868">0.84</text><text x="697.56" y="868">0.73</text><text x="758.80" y="868">0.74</text><text x="820.04" y="868">0.92</text><text x="881.28" y="868">1.20</text><text x="942.51" y="868">1.02</text><text x="1003.75" y="868">0.40</text><text x="1064.99" y="868">-0.18</text><text x="1126.23" y="868">-0.78</text><text x="1187.47" y="868">-0.76</text><text x="1248.70" y="868">-0.89</text><text x="1309.94" y="868">-0.98</text><text x="1371.18" y="868">-1.17</text><text x="146.42" y="906">1.23</text><text x="207.66" y="906">1.24</text><text x="268.90" y="906">1.27</text><text x="330.13" y="906">1.37</text><text x="391.37" y="906">1.42</text><text x="452.61" y="906">1.54</text><text x="513.85" y="906">1.46</text><text x="575.09" y="906">1.32</text><text x="636.32" y="906">0.95</text><text x="697.56" y="906">0.76</text><text x="758.80" y="906">0.61</text><text x="820.04" y="906">0.75</text><text x="881.28" y="906">1.07</text><text x="942.51" y="906">1.16</text><text x="1003.75" y="906">0.66</text><text x="1064.99" y="906">0.08</text><text x="1126.23" y="906">-0.60</text><text x="1187.47" y="906">-0.88</text><text x="1248.70" y="906">-1.05</text><text x="1309.94" y="906">-1.27</text><text x="1371.18" y="906">-1.34</text><text x="146.42" y="944">1.16</text><text x="207.66" y="944">1.22</text><text x="268.90" y="944">1.32</text><text x="330.13" y="944">1.44</text><text x="391.37" y="944">1.43</text><text x="452.61" y="944">1.55</text><text x="513.85" y="944">1.48</text><text x="575.09" y="944">1.38</text><text x="636.32" y="944">1.07</text><text x="697.56" y="944">0.72</text><text x="758.80" y="944">0.60</text><text x="820.04" y="944">0.54</text><text x="881.28" y="944">0.82</text><text x="942.51" y="944">1.09</text><text x="1003.75" y="944">0.89</text><text x="1064.99" y="944">0.38</text><text x="1126.23" y="944">-0.22</text><text x="1187.47" y="944">-0.71</text><text x="1248.70" y="944">-1.08</text><text x="1309.94" y="944">-1.47</text><text x="1371.18" y="944">-1.74</text><text x="146.42" y="982">1.13</text><text x="207.66" y="982">1.18</text><text x="268.90" y="982">1.34</text><text x="330.13" y="982">1.45</text><text x="391.37" y="982">1.50</text><text x="452.61" y="982">1.59</text><text x="513.85" y="982">1.49</text><text x="575.09" y="982">1.40</text><text x="636.32" y="982">1.27</text><text x="697.56" y="982">0.97</text><text x="758.80" y="982">0.77</text><text x="820.04" y="982">0.54</text><text x="881.28" y="982">0.71</text><text x="942.51" y="982">0.93</text><text x="1003.75" y="982">1.03</text><text x="1064.99" y="982">0.76</text><text x="1126.23" y="982">0.06</text><text x="1187.47" y="982">-0.41</text><text x="1248.70" y="982">-0.98</text><text x="1309.94" y="982">-1.43</text><text x="1371.18" y="982">-1.46</text><text x="146.42" y="1018">1.06</text><text x="207.66" y="1018">1.06</text><text x="268.90" y="1018">1.25</text><text x="330.13" y="1018">1.36</text><text x="391.37" y="1018">1.47</text><text x="452.61" y="1018">1.50</text><text x="513.85" y="1018">1.44</text><text x="575.09" y="1018">1.36</text><text x="636.32" y="1018">1.36</text><text x="697.56" y="1018">1.16</text><text x="758.80" y="1018">0.97</text><text x="820.04" y="1018">0.71</text><text x="881.28" y="1018">0.67</text><text x="942.51" y="1018">0.83</text><text x="1003.75" y="1018">1.02</text><text x="1064.99" y="1018">0.95</text><text x="1126.23" y="1018">0.57</text><text x="1187.47" y="1018">0.03</text><text x="1248.70" y="1018">-0.56</text><text x="1309.94" y="1018">-1.25</text><text x="1371.18" y="1018">-1.51</text><text x="146.42" y="1056">0.98</text><text x="207.66" y="1056">0.97</text><text x="268.90" y="1056">1.12</text><text x="330.13" y="1056">1.27</text><text x="391.37" y="1056">1.45</text><text x="452.61" y="1056">1.47</text><text x="513.85" y="1056">1.48</text><text x="575.09" y="1056">1.32</text><text x="636.32" y="1056">1.32</text><text x="697.56" y="1056">1.21</text><text x="758.80" y="1056">1.11</text><text x="820.04" y="1056">0.80</text><text x="881.28" y="1056">0.63</text><text x="942.51" y="1056">0.66</text><text x="1003.75" y="1056">0.90</text><text x="1064.99" y="1056">1.01</text><text x="1126.23" y="1056">0.91</text><text x="1187.47" y="1056">0.35</text><text x="1248.70" y="1056">-0.26</text><text x="1309.94" y="1056">-0.81</text><text x="1371.18" y="1056">-1.20</text><text x="146.42" y="1094">0.87</text><text x="207.66" y="1094">0.93</text><text x="268.90" y="1094">0.95</text><text x="330.13" y="1094">1.15</text><text x="391.37" y="1094">1.29</text><text x="452.61" y="1094">1.32</text><text x="513.85" y="1094">1.34</text><text x="575.09" y="1094">1.16</text><text x="636.32" y="1094">1.19</text><text x="697.56" y="1094">1.20</text><text x="758.80" y="1094">1.23</text><text x="820.04" y="1094">1.03</text><text x="881.28" y="1094">0.80</text><text x="942.51" y="1094">0.66</text><text x="1003.75" y="1094">0.75</text><text x="1064.99" y="1094">0.93</text><text x="1126.23" y="1094">0.92</text><text x="1187.47" y="1094">0.69</text><text x="1248.70" y="1094">0.06</text><text x="1309.94" y="1094">-0.43</text><text x="1371.18" y="1094">-0.88</text><text x="146.42" y="1130">0.78</text><text x="207.66" y="1130">0.93</text><text x="268.90" y="1130">0.94</text><text x="330.13" y="1130">1.10</text><text x="391.37" y="1130">1.24</text><text x="452.61" y="1130">1.25</text><text x="513.85" y="1130">1.26</text><text x="575.09" y="1130">1.10</text><text x="636.32" y="1130">1.04</text><text x="697.56" y="1130">1.06</text><text x="758.80" y="1130">1.18</text><text x="820.04" y="1130">1.16</text><text x="881.28" y="1130">0.96</text><text x="942.51" y="1130">0.75</text><text x="1003.75" y="1130">0.69</text><text x="1064.99" y="1130">0.89</text><text x="1126.23" y="1130">0.99</text><text x="1187.47" y="1130">0.88</text><text x="1248.70" y="1130">0.38</text><text x="1309.94" y="1130">-0.19</text><text x="1371.18" y="1130">-0.30</text><text x="146.42" y="1168">0.83</text><text x="207.66" y="1168">0.93</text><text x="268.90" y="1168">1.02</text><text x="330.13" y="1168">1.08</text><text x="391.37" y="1168">1.18</text><text x="452.61" y="1168">1.12</text><text x="513.85" y="1168">1.07</text><text x="575.09" y="1168">1.07</text><text x="636.32" y="1168">1.01</text><text x="697.56" y="1168">1.08</text><text x="758.80" y="1168">1.12</text><text x="820.04" y="1168">1.23</text><text x="881.28" y="1168">1.15</text><text x="942.51" y="1168">0.87</text><text x="1003.75" y="1168">0.67</text><text x="1064.99" y="1168">0.66</text><text x="1126.23" y="1168">0.87</text><text x="1187.47" y="1168">0.90</text><text x="1248.70" y="1168">0.76</text><text x="1309.94" y="1168">0.26</text><text x="1371.18" y="1168">0.05</text><text x="146.42" y="1206">0.85</text><text x="207.66" y="1206">0.89</text><text x="268.90" y="1206">1.08</text><text x="330.13" y="1206">1.11</text><text x="391.37" y="1206">1.21</text><text x="452.61" y="1206">1.13</text><text x="513.85" y="1206">1.02</text><text x="575.09" y="1206">0.99</text><text x="636.32" y="1206">0.90</text><text x="697.56" y="1206">1.09</text><text x="758.80" y="1206">1.13</text><text x="820.04" y="1206">1.25</text><text x="881.28" y="1206">1.23</text><text x="942.51" y="1206">1.09</text><text x="1003.75" y="1206">0.89</text><text x="1064.99" y="1206">0.69</text><text x="1126.23" y="1206">0.81</text><text x="1187.47" y="1206">0.89</text><text x="1248.70" y="1206">0.79</text><text x="1309.94" y="1206">0.55</text><text x="1371.18" y="1206">0.34</text><text x="146.42" y="1242">0.85</text><text x="207.66" y="1242">0.89</text><text x="268.90" y="1242">1.07</text><text x="330.13" y="1242">1.15</text><text x="391.37" y="1242">1.19</text><text x="452.61" y="1242">1.08</text><text x="513.85" y="1242">0.93</text><text x="575.09" y="1242">0.89</text><text x="636.32" y="1242">0.91</text><text x="697.56" y="1242">1.07</text><text x="758.80" y="1242">1.11</text><text x="820.04" y="1242">1.21</text><text x="881.28" y="1242">1.26</text><text x="942.51" y="1242">1.13</text><text x="1003.75" y="1242">0.90</text><text x="1064.99" y="1242">0.69</text><text x="1126.23" y="1242">0.67</text><text x="1187.47" y="1242">0.81</text><text x="1248.70" y="1242">0.86</text><text x="1309.94" y="1242">0.78</text><text x="1371.18" y="1242">0.60</text><text x="146.42" y="1280">0.82</text><text x="207.66" y="1280">0.89</text><text x="268.90" y="1280">1.05</text><text x="330.13" y="1280">1.15</text><text x="391.37" y="1280">1.20</text><text x="452.61" y="1280">1.17</text><text x="513.85" y="1280">0.93</text><text x="575.09" y="1280">0.83</text><text x="636.32" y="1280">0.75</text><text x="697.56" y="1280">0.94</text><text x="758.80" y="1280">1.16</text><text x="820.04" y="1280">1.22</text><text x="881.28" y="1280">1.26</text><text x="942.51" y="1280">1.25</text><text x="1003.75" y="1280">1.17</text><text x="1064.99" y="1280">0.91</text><text x="1126.23" y="1280">0.74</text><text x="1187.47" y="1280">0.69</text><text x="1248.70" y="1280">0.80</text><text x="1309.94" y="1280">0.84</text><text x="1371.18" y="1280">0.93</text><text x="146.42" y="1318">0.83</text><text x="207.66" y="1318">0.88</text><text x="268.90" y="1318">1.06</text><text x="330.13" y="1318">1.18</text><text x="391.37" y="1318">1.18</text><text x="452.61" y="1318">1.18</text><text x="513.85" y="1318">0.87</text><text x="575.09" y="1318">0.79</text><text x="636.32" y="1318">0.65</text><text x="697.56" y="1318">0.82</text><text x="758.80" y="1318">1.07</text><text x="820.04" y="1318">1.29</text><text x="881.28" y="1318">1.35</text><text x="942.51" y="1318">1.27</text><text x="1003.75" y="1318">1.24</text><text x="1064.99" y="1318">1.09</text><text x="1126.23" y="1318">0.88</text><text x="1187.47" y="1318">0.76</text><text x="1248.70" y="1318">0.79</text><text x="1309.94" y="1318">0.88</text><text x="1371.18" y="1318">1.07</text><text x="146.42" y="1354">0.77</text><text x="207.66" y="1354">0.80</text><text x="268.90" y="1354">1.02</text><text x="330.13" y="1354">1.15</text><text x="391.37" y="1354">1.18</text><text x="452.61" y="1354">1.23</text><text x="513.85" y="1354">1.01</text><text x="575.09" y="1354">0.85</text><text x="636.32" y="1354">0.61</text><text x="697.56" y="1354">0.65</text><text x="758.80" y="1354">0.86</text><text x="820.04" y="1354">1.10</text><text x="881.28" y="1354">1.32</text><text x="942.51" y="1354">1.35</text><text x="1003.75" y="1354">1.29</text><text x="1064.99" y="1354">1.19</text><text x="1126.23" y="1354">1.05</text><text x="1187.47" y="1354">0.80</text><text x="1248.70" y="1354">0.77</text><text x="1309.94" y="1354">0.83</text><text x="1371.18" y="1354">0.84</text><text x="146.42" y="1392">0.75</text><text x="207.66" y="1392">0.76</text><text x="268.90" y="1392">1.00</text><text x="330.13" y="1392">1.10</text><text x="391.37" y="1392">1.17</text><text x="452.61" y="1392">1.19</text><text x="513.85" y="1392">1.09</text><text x="575.09" y="1392">0.89</text><text x="636.32" y="1392">0.71</text><text x="697.56" y="1392">0.59</text><text x="758.80" y="1392">0.71</text><text x="820.04" y="1392">0.94</text><text x="881.28" y="1392">1.19</text><text x="942.51" y="1392">1.33</text><text x="1003.75" y="1392">1.28</text><text x="1064.99" y="1392">1.25</text><text x="1126.23" y="1392">1.17</text><text x="1187.47" y="1392">0.94</text><text x="1248.70" y="1392">0.81</text><text x="1309.94" y="1392">0.74</text><text x="1371.18" y="1392">0.67</text><text x="146.42" y="1430">0.62</text><text x="207.66" y="1430">0.66</text><text x="268.90" y="1430">0.90</text><text x="330.13" y="1430">0.95</text><text x="391.37" y="1430">1.07</text><text x="452.61" y="1430">1.10</text><text x="513.85" y="1430">1.12</text><text x="575.09" y="1430">1.02</text><text x="636.32" y="1430">0.82</text><text x="697.56" y="1430">0.57</text><text x="758.80" y="1430">0.56</text><text x="820.04" y="1430">0.67</text><text x="881.28" y="1430">0.93</text><text x="942.51" y="1430">1.25</text><text x="1003.75" y="1430">1.31</text><text x="1064.99" y="1430">1.28</text><text x="1126.23" y="1430">1.23</text><text x="1187.47" y="1430">1.12</text><text x="1248.70" y="1430">0.91</text><text x="1309.94" y="1430">0.78</text><text x="1371.18" y="1430">0.67</text><text x="146.42" y="1466">0.58</text><text x="207.66" y="1466">0.55</text><text x="268.90" y="1466">0.77</text><text x="330.13" y="1466">0.83</text><text x="391.37" y="1466">1.00</text><text x="452.61" y="1466">1.08</text><text x="513.85" y="1466">1.14</text><text x="575.09" y="1466">1.13</text><text x="636.32" y="1466">0.97</text><text x="697.56" y="1466">0.72</text><text x="758.80" y="1466">0.45</text><text x="820.04" y="1466">0.37</text><text x="881.28" y="1466">0.45</text><text x="942.51" y="1466">0.77</text><text x="1003.75" y="1466">1.12</text><text x="1064.99" y="1466">1.26</text><text x="1126.23" y="1466">1.26</text><text x="1187.47" y="1466">1.22</text><text x="1248.70" y="1466">1.09</text><text x="1309.94" y="1466">0.91</text><text x="1371.18" y="1466">0.92</text><text x="146.42" y="1504">0.39</text><text x="207.66" y="1504">0.46</text><text x="268.90" y="1504">0.62</text><text x="330.13" y="1504">0.76</text><text x="391.37" y="1504">0.87</text><text x="452.61" y="1504">1.06</text><text x="513.85" y="1504">1.15</text><text x="575.09" y="1504">1.21</text><text x="636.32" y="1504">1.09</text><text x="697.56" y="1504">0.82</text><text x="758.80" y="1504">0.31</text><text x="820.04" y="1504">0.15</text><text x="881.28" y="1504">0.13</text><text x="942.51" y="1504">0.41</text><text x="1003.75" y="1504">0.77</text><text x="1064.99" y="1504">1.03</text><text x="1126.23" y="1504">1.20</text><text x="1187.47" y="1504">1.19</text><text x="1248.70" y="1504">1.21</text><text x="1309.94" y="1504">1.13</text><text x="1371.18" y="1504">1.04</text><text x="146.42" y="1542">0.37</text><text x="207.66" y="1542">0.42</text><text x="268.90" y="1542">0.48</text><text x="330.13" y="1542">0.80</text><text x="391.37" y="1542">0.86</text><text x="452.61" y="1542">1.11</text><text x="513.85" y="1542">1.17</text><text x="575.09" y="1542">1.31</text><text x="636.32" y="1542">1.11</text><text x="697.56" y="1542">0.82</text><text x="758.80" y="1542">0.35</text><text x="820.04" y="1542">-0.06</text><text x="881.28" y="1542">-0.20</text><text x="942.51" y="1542">0.15</text><text x="1003.75" y="1542">0.58</text><text x="1064.99" y="1542">0.91</text><text x="1126.23" y="1542">1.25</text><text x="1187.47" y="1542">1.18</text><text x="1248.70" y="1542">1.20</text><text x="1309.94" y="1542">1.20</text><text x="1371.18" y="1542">1.15</text></g>
<g font-size="22" fill="#cdcdcd" stroke="#cdcdcd" stroke-width="0.35" text-anchor="end"><text transform="translate(109.5 309.88) scale(1 1.06)">60</text><text transform="translate(109.5 347.23) scale(1 1.06)">59</text><text transform="translate(109.5 384.58) scale(1 1.06)">58</text><text transform="translate(109.5 421.94) scale(1 1.06)">57</text><text transform="translate(109.5 459.29) scale(1 1.06)">56</text><text transform="translate(109.5 496.64) scale(1 1.06)">55</text><text transform="translate(109.5 533.99) scale(1 1.06)">54</text><text transform="translate(109.5 571.35) scale(1 1.06)">53</text><text transform="translate(109.5 608.70) scale(1 1.06)">52</text><text transform="translate(109.5 646.05) scale(1 1.06)">51</text><text transform="translate(109.5 683.41) scale(1 1.06)">50</text><text transform="translate(109.5 720.76) scale(1 1.06)">49</text><text transform="translate(109.5 758.11) scale(1 1.06)">48</text><text transform="translate(109.5 795.46) scale(1 1.06)">47</text><text transform="translate(109.5 832.82) scale(1 1.06)">46</text><text transform="translate(109.5 870.17) scale(1 1.06)">45</text><text transform="translate(109.5 907.52) scale(1 1.06)">44</text><text transform="translate(109.5 944.88) scale(1 1.06)">43</text><text transform="translate(109.5 982.23) scale(1 1.06)">42</text><text transform="translate(109.5 1019.58) scale(1 1.06)">41</text><text transform="translate(109.5 1056.94) scale(1 1.06)">40</text><text transform="translate(109.5 1094.29) scale(1 1.06)">39</text><text transform="translate(109.5 1131.64) scale(1 1.06)">38</text><text transform="translate(109.5 1168.99) scale(1 1.06)">37</text><text transform="translate(109.5 1206.35) scale(1 1.06)">36</text><text transform="translate(109.5 1243.70) scale(1 1.06)">35</text><text transform="translate(109.5 1281.05) scale(1 1.06)">34</text><text transform="translate(109.5 1318.41) scale(1 1.06)">33</text><text transform="translate(109.5 1355.76) scale(1 1.06)">32</text><text transform="translate(109.5 1393.11) scale(1 1.06)">31</text><text transform="translate(109.5 1430.46) scale(1 1.06)">30</text><text transform="translate(109.5 1467.82) scale(1 1.06)">29</text><text transform="translate(109.5 1505.17) scale(1 1.06)">28</text><text transform="translate(109.5 1542.52) scale(1 1.06)">27</text></g>
<g font-size="22" fill="#cdcdcd" stroke="#cdcdcd" stroke-width="0.35" text-anchor="middle"><text transform="translate(146.42 1582.3) scale(1 1.06)">6</text><text transform="translate(207.66 1582.3) scale(1 1.06)">7</text><text transform="translate(268.90 1582.3) scale(1 1.06)">8</text><text transform="translate(330.13 1582.3) scale(1 1.06)">9</text><text transform="translate(391.37 1582.3) scale(1 1.06)">10</text><text transform="translate(452.61 1582.3) scale(1 1.06)">11</text><text transform="translate(513.85 1582.3) scale(1 1.06)">12</text><text transform="translate(575.09 1582.3) scale(1 1.06)">13</text><text transform="translate(636.32 1582.3) scale(1 1.06)">14</text><text transform="translate(697.56 1582.3) scale(1 1.06)">15</text><text transform="translate(758.80 1582.3) scale(1 1.06)">16</text><text transform="translate(820.04 1582.3) scale(1 1.06)">17</text><text transform="translate(881.28 1582.3) scale(1 1.06)">18</text><text transform="translate(942.51 1582.3) scale(1 1.06)">19</text><text transform="translate(1003.75 1582.3) scale(1 1.06)">20</text><text transform="translate(1064.99 1582.3) scale(1 1.06)">21</text><text transform="translate(1126.23 1582.3) scale(1 1.06)">22</text><text transform="translate(1187.47 1582.3) scale(1 1.06)">23</text><text transform="translate(1248.70 1582.3) scale(1 1.06)">24</text><text transform="translate(1309.94 1582.3) scale(1 1.06)">25</text><text transform="translate(1371.18 1582.3) scale(1 1.06)">26</text></g>
<text transform="translate(759 1635) scale(1 1.05)" font-size="26" fill="#cdcdcd" stroke="#cdcdcd" stroke-width="0.35" text-anchor="middle">EMA period [fast]</text>
<text transform="translate(38 918.4) rotate(-90) scale(1 1.05)" font-size="26" fill="#cdcdcd" stroke="#cdcdcd" stroke-width="0.35" text-anchor="middle">EMA period [slow]</text>
<text transform="translate(1447 330) scale(1 1.05)" font-size="26" fill="#cdcdcd" stroke="#cdcdcd" stroke-width="0.35">Nbr Avg</text>
<rect x="1448" y="344.0" width="60" height="1189.0" fill="url(#cb)"/>
<g font-size="22" fill="#cdcdcd" stroke="#cdcdcd" stroke-width="0.35"><text transform="translate(1514 422.50) scale(1 1.06)">1.5</text><text transform="translate(1514 595.30) scale(1 1.06)">1</text><text transform="translate(1514 768.10) scale(1 1.06)">0.5</text><text transform="translate(1514 940.90) scale(1 1.06)">0</text><text transform="translate(1514 1113.70) scale(1 1.06)">−0.5</text><text transform="translate(1514 1286.50) scale(1 1.06)">−1</text><text transform="translate(1514 1459.30) scale(1 1.06)">−1.5</text></g>
<text x="722" y="1530" font-size="38" fill="#fff" fill-opacity="0.95" stroke="#fff" stroke-opacity="0.95" stroke-width="0.5">STRATEDA PLATFORM | strateda.com</text>
</svg>
<svg class="mb" style="left:1232px" viewBox="0 0 1000 1000" width="32" height="32"><path d="m500 450c-83 0-150-67-150-150 0-83 67-150 150-150 83 0 150 67 150 150 0 83-67 150-150 150z m400 150h-120c-16 0-34 13-39 29l-31 93c-6 15-23 28-40 28h-340c-16 0-34-13-39-28l-31-94c-6-15-23-28-40-28h-120c-55 0-100-45-100-100v-450c0-55 45-100 100-100h800c55 0 100 45 100 100v450c0 55-45 100-100 100z m-400-550c-138 0-250 112-250 250 0 138 112 250 250 250 138 0 250-112 250-250 0-138-112-250-250-250z m365 380c-19 0-35 16-35 35 0 19 16 35 35 35 19 0 35-16 35-35 0-19-16-35-35-35z" transform="matrix(1 0 0 -1 0 850)" fill="#6f6f6f"/></svg><svg class="mb" style="left:1296px" viewBox="0 0 1000 1000" width="32" height="32"><path d="m1000-25l-250 251c40 63 63 138 63 218 0 224-182 406-407 406-224 0-406-182-406-406s183-406 407-406c80 0 155 22 218 62l250-250 125 125z m-812 250l0 438 437 0 0-438-437 0z m62 375l313 0 0-312-313 0 0 312z" transform="matrix(1 0 0 -1 0 850)" fill="#c8c8c8"/></svg><svg class="mb" style="left:1344px" viewBox="0 0 1000 1000" width="32" height="32"><path d="m1000 350l-187 188 0-125-250 0 0 250 125 0-188 187-187-187 125 0 0-250-250 0 0 125-188-188 186-187 0 125 252 0 0-250-125 0 187-188 188 188-125 0 0 250 250 0 0-126 187 188z" transform="matrix(1 0 0 -1 0 850)" fill="#6f6f6f"/></svg><svg class="mb" style="left:1408px" viewBox="0 0 875 1000" width="32" height="32"><path d="m1 787l0-875 875 0 0 875-875 0z m687-500l-187 0 0-187-125 0 0 187-188 0 0 125 188 0 0 187 125 0 0-187 187 0 0-125z" transform="matrix(1 0 0 -1 0 850)" fill="#6f6f6f"/></svg><svg class="mb" style="left:1456px" viewBox="0 0 875 1000" width="32" height="32"><path d="m0 788l0-876 875 0 0 876-875 0z m688-500l-500 0 0 125 500 0 0-125z" transform="matrix(1 0 0 -1 0 850)" fill="#6f6f6f"/></svg><svg class="mb" style="left:1504px" viewBox="0 0 1000 1000" width="32" height="32"><path d="m250 850l-187 0-63 0 0-62 0-188 63 0 0 188 187 0 0 62z m688 0l-188 0 0-62 188 0 0-188 62 0 0 188 0 62-62 0z m-875-938l0 188-63 0 0-188 0-62 63 0 187 0 0 62-187 0z m875 188l0-188-188 0 0-62 188 0 62 0 0 62 0 188-62 0z m-125 188l-1 0-93-94-156 156 156 156 92-93 2 0 0 250-250 0 0-2 93-92-156-156-156 156 94 92 0 2-250 0 0-250 0 0 93 93 157-156-157-156-93 94 0 0 0-250 250 0 0 0-94 93 156 157 156-157-93-93 0 0 250 0 0 250z" transform="matrix(1 0 0 -1 0 850)" fill="#6f6f6f"/></svg><svg class="mb" style="left:1552px" viewBox="0 0 928.6 1000" width="32" height="32"><path d="m786 296v-267q0-15-11-26t-25-10h-214v214h-143v-214h-214q-15 0-25 10t-11 26v267q0 1 0 2t0 2l321 264 321-264q1-1 1-4z m124 39l-34-41q-5-5-12-6h-2q-7 0-12 3l-386 322-386-322q-7-4-13-4-7 2-12 7l-35 41q-4 5-3 13t6 12l401 334q18 15 42 15t43-15l136-114v109q0 8 5 13t13 5h107q8 0 13-5t5-13v-227l122-102q5-5 6-12t-4-13z" transform="matrix(1 0 0 -1 0 850)" fill="#6f6f6f"/></svg>
<div id="bline"></div>
<svg class="abs" style="left:0;top:1655px" width="20" height="14"><path d="M0.5 5 Q1 13 8 13 H20" fill="none" stroke="#4a4a4a" stroke-width="2"/></svg>
<div id="bottom"></div>
<div class="abs" style="left:158px;top:1669px;width:30px;height:3px;background:#9a9a9a"></div>
<div class="abs" style="left:277px;top:1669px;width:2px;height:3px;background:#444"></div>
<div class="abs" style="left:291px;top:1669px;width:27px;height:3px;background:#8a3a3a"></div>
<div class="abs" style="left:346px;top:1669px;width:31px;height:3px;background:#8a3a3a"></div>
</body></html>
